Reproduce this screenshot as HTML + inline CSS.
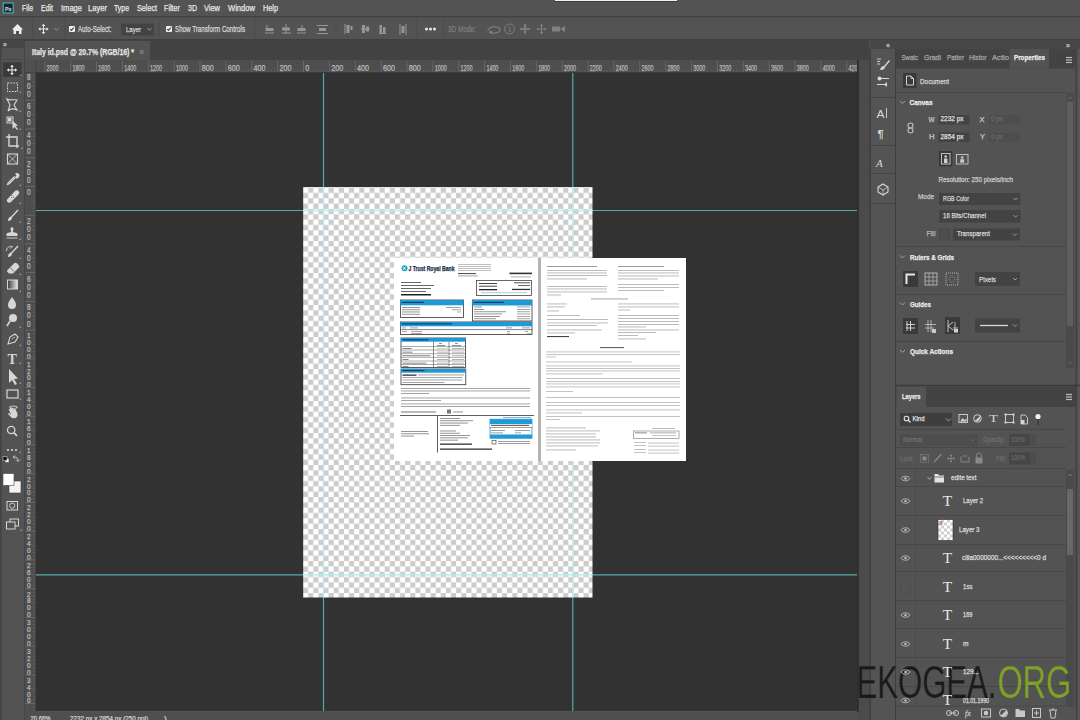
<!DOCTYPE html>
<html><head><meta charset="utf-8"><style>html,body{margin:0;padding:0;width:1080px;height:720px;overflow:hidden;background:#535353}svg{display:block;font-family:"Liberation Sans",sans-serif}</style></head><body><svg width="1080" height="720" viewBox="0 0 1080 720" font-family="Liberation Sans, sans-serif" shape-rendering="auto"><rect x="0" y="0" width="1080" height="720" fill="#535353"/>
<rect x="0" y="0" width="1080" height="16" fill="#535353"/>
<rect x="0" y="16" width="1080" height="1.6" fill="#424242"/>
<rect x="3.3" y="3" width="10" height="10" fill="#0a2a30" stroke="#4f9a90" stroke-width="1.4"/>
<text x="5" y="10.8" font-size="6" fill="#c6bde6" textLength="6.5" lengthAdjust="spacingAndGlyphs" font-weight="bold" stroke="#c6bde6" stroke-width="0.25">Ps</text>
<rect x="555" y="0" width="122" height="1" fill="#f0f0f0"/>
<rect x="555" y="1" width="122" height="1" fill="#3c3c3c"/>
<text x="22" y="11" font-size="9" fill="#e8e8e8" textLength="11" lengthAdjust="spacingAndGlyphs" stroke="#e8e8e8" stroke-width="0.25">File</text>
<text x="41" y="11" font-size="9" fill="#e8e8e8" textLength="12" lengthAdjust="spacingAndGlyphs" stroke="#e8e8e8" stroke-width="0.25">Edit</text>
<text x="61" y="11" font-size="9" fill="#e8e8e8" textLength="21" lengthAdjust="spacingAndGlyphs" stroke="#e8e8e8" stroke-width="0.25">Image</text>
<text x="88" y="11" font-size="9" fill="#e8e8e8" textLength="19" lengthAdjust="spacingAndGlyphs" stroke="#e8e8e8" stroke-width="0.25">Layer</text>
<text x="114" y="11" font-size="9" fill="#e8e8e8" textLength="15" lengthAdjust="spacingAndGlyphs" stroke="#e8e8e8" stroke-width="0.25">Type</text>
<text x="137" y="11" font-size="9" fill="#e8e8e8" textLength="20" lengthAdjust="spacingAndGlyphs" stroke="#e8e8e8" stroke-width="0.25">Select</text>
<text x="164" y="11" font-size="9" fill="#e8e8e8" textLength="16" lengthAdjust="spacingAndGlyphs" stroke="#e8e8e8" stroke-width="0.25">Filter</text>
<text x="188" y="11" font-size="9" fill="#e8e8e8" textLength="9" lengthAdjust="spacingAndGlyphs" stroke="#e8e8e8" stroke-width="0.25">3D</text>
<text x="204" y="11" font-size="9" fill="#e8e8e8" textLength="16" lengthAdjust="spacingAndGlyphs" stroke="#e8e8e8" stroke-width="0.25">View</text>
<text x="228" y="11" font-size="9" fill="#e8e8e8" textLength="27" lengthAdjust="spacingAndGlyphs" stroke="#e8e8e8" stroke-width="0.25">Window</text>
<text x="263" y="11" font-size="9" fill="#e8e8e8" textLength="15" lengthAdjust="spacingAndGlyphs" stroke="#e8e8e8" stroke-width="0.25">Help</text>
<rect x="0" y="17.6" width="1080" height="22" fill="#535353"/>
<line x1="0" y1="39.5" x2="1080" y2="39.5" stroke="#3f3f3f" stroke-width="1"/>
<path d="M12,29.5 L17.5,24 L23,29.5 L21.5,29.5 L21.5,34 L19,34 L19,31 L16,31 L16,34 L13.5,34 L13.5,29.5 Z" fill="#ececec"/>
<line x1="32.5" y1="19" x2="32.5" y2="37" stroke="#4c4c4c" stroke-width="1"/>
<path d="M39.5,29 L47.5,29 M43.5,25.0 L43.5,33.0" fill="none" stroke="#e8e8e8" stroke-width="1.0"/>
<path d="M38.3,29 L40.5,27.2 L40.5,30.8 Z M48.7,29 L46.5,27.2 L46.5,30.8 Z M43.5,23.8 L41.7,26.0 L45.3,26.0 Z M43.5,34.2 L41.7,32.0 L45.3,32.0 Z" fill="#e8e8e8"/>
<path d="M54.5,28 L56.5,30.5 L58.5,28" fill="none" stroke="#8a8a8a" stroke-width="1"/>
<line x1="65" y1="19" x2="65" y2="37" stroke="#4c4c4c" stroke-width="1"/>
<rect x="69.0" y="26.0" width="6" height="6" fill="#f0f0f0" rx="1"/>
<path d="M70.3,29.1 L71.5,30.4 L73.8,27.5" fill="none" stroke="#3a3a3a" stroke-width="1.1"/>
<text x="78" y="32" font-size="8.5" fill="#d8d8d8" textLength="33.5" lengthAdjust="spacingAndGlyphs" stroke="#d8d8d8" stroke-width="0.25">Auto-Select:</text>
<rect x="121" y="23.5" width="33" height="12" fill="#434343"/>
<text x="126" y="32" font-size="8" fill="#d8d8d8" textLength="15" lengthAdjust="spacingAndGlyphs" stroke="#d8d8d8" stroke-width="0.25">Layer</text>
<path d="M147.5,28 L149.5,30.5 L151.5,28" fill="none" stroke="#9a9a9a" stroke-width="1"/>
<line x1="159" y1="19" x2="159" y2="37" stroke="#4c4c4c" stroke-width="1"/>
<rect x="166.0" y="26.0" width="6" height="6" fill="#f0f0f0" rx="1"/>
<path d="M167.3,29.1 L168.5,30.4 L170.8,27.5" fill="none" stroke="#3a3a3a" stroke-width="1.1"/>
<text x="175" y="32" font-size="8.5" fill="#d8d8d8" textLength="70" lengthAdjust="spacingAndGlyphs" stroke="#d8d8d8" stroke-width="0.25">Show Transform Controls</text>
<line x1="255" y1="19" x2="255" y2="37" stroke="#4c4c4c" stroke-width="1"/>
<line x1="265" y1="33" x2="274" y2="33" stroke="#969696" stroke-width="1"/>
<line x1="282" y1="33" x2="291" y2="33" stroke="#969696" stroke-width="1"/>
<line x1="297" y1="33" x2="306" y2="33" stroke="#969696" stroke-width="1"/>
<rect x="265.5" y="28" width="8" height="3" fill="#969696"/>
<line x1="267" y1="25" x2="267" y2="28" stroke="#969696" stroke-width="1"/>
<rect x="282" y="27.5" width="8" height="3" fill="#969696"/>
<line x1="286" y1="24" x2="286" y2="34" stroke="#969696" stroke-width="1"/>
<rect x="297.5" y="28" width="8" height="3" fill="#969696"/>
<line x1="302" y1="25" x2="302" y2="28" stroke="#969696" stroke-width="1"/>
<line x1="317" y1="25.5" x2="328" y2="25.5" stroke="#969696" stroke-width="1"/>
<line x1="317" y1="33.5" x2="328" y2="33.5" stroke="#969696" stroke-width="1"/>
<rect x="319" y="28" width="7" height="3" fill="#969696"/>
<line x1="336" y1="19" x2="336" y2="37" stroke="#4c4c4c" stroke-width="1"/>
<line x1="345" y1="24" x2="345" y2="34" stroke="#969696" stroke-width="1"/>
<rect x="346.5" y="25" width="3" height="8" fill="#969696"/>
<rect x="350.5" y="26" width="2" height="4" fill="#969696"/>
<line x1="361" y1="29" x2="370" y2="29" stroke="#969696" stroke-width="1"/>
<rect x="362" y="25" width="3" height="8" fill="#969696"/>
<rect x="366" y="26.5" width="3" height="5" fill="#969696"/>
<line x1="379" y1="33.5" x2="386" y2="33.5" stroke="#969696" stroke-width="1"/>
<rect x="379.5" y="25" width="2.5" height="8" fill="#969696"/>
<rect x="383" y="27" width="2.5" height="6" fill="#969696"/>
<line x1="400" y1="24" x2="400" y2="35" stroke="#969696" stroke-width="1"/>
<line x1="406" y1="24" x2="406" y2="35" stroke="#969696" stroke-width="1"/>
<rect x="401.5" y="26" width="3" height="7" fill="#969696"/>
<line x1="416.5" y1="19" x2="416.5" y2="37" stroke="#4c4c4c" stroke-width="1"/>
<circle cx="426.5" cy="29" r="1.5" fill="#e8e8e8"/>
<circle cx="430.5" cy="29" r="1.5" fill="#e8e8e8"/>
<circle cx="434.5" cy="29" r="1.5" fill="#e8e8e8"/>
<line x1="443" y1="19" x2="443" y2="37" stroke="#4c4c4c" stroke-width="1"/>
<text x="448" y="32" font-size="8.5" fill="#7c7c7c" textLength="28" lengthAdjust="spacingAndGlyphs" stroke="#7c7c7c" stroke-width="0.25">3D Mode:</text>
<path d="M488,31 C488,26 500,25 500,30 C500,33 492,34 489,32" fill="none" stroke="#808080" stroke-width="1.1"/>
<circle cx="491" cy="32" r="1.3" fill="#808080"/>
<circle cx="509.5" cy="29" r="5" fill="none" stroke="#808080" stroke-width="1"/>
<path d="M508,26.5 L510.5,28.5 L509,31 L511,32" fill="none" stroke="#808080" stroke-width="1"/>
<path d="M521.4,29 L528.6,29 M525,25.4 L525,32.6" fill="none" stroke="#808080" stroke-width="0.9"/>
<path d="M520.32,29 L522.3000000000001,27.38 L522.3000000000001,30.62 Z M529.68,29 L527.6999999999999,27.38 L527.6999999999999,30.62 Z M525,24.32 L523.38,26.3 L526.62,26.3 Z M525,33.68 L523.38,31.7 L526.62,31.7 Z" fill="#808080"/>
<path d="M520,29 L530,29 M525,24 L525,34" fill="none" stroke="#808080" stroke-width="1.5"/>
<path d="M537.5,29 L545.5,29 M541.5,25 L541.5,33" fill="none" stroke="#808080" stroke-width="1.0"/>
<path d="M536.3,29 L538.5,27.2 L538.5,30.8 Z M546.7,29 L544.5,27.2 L544.5,30.8 Z M541.5,23.8 L539.7,26.0 L543.3,26.0 Z M541.5,34.2 L539.7,32.0 L543.3,32.0 Z" fill="#808080"/>
<rect x="552" y="26.5" width="8" height="5" fill="#808080"/>
<path d="M560,29 L565,26 L565,32 Z" fill="#808080"/>
<rect x="24" y="40" width="845" height="20" fill="#424242"/>
<rect x="25" y="41" width="125" height="19" fill="#535353"/>
<text x="32" y="55" font-size="9" fill="#e6e6e6" textLength="102" lengthAdjust="spacingAndGlyphs" font-weight="bold" stroke="#e6e6e6" stroke-width="0.25">Italy id.psd @ 20.7% (RGB/16) *</text>
<text x="139" y="55" font-size="9" fill="#8a8a8a" stroke="#8a8a8a" stroke-width="0.25">×</text>
<rect x="0" y="40" width="24" height="680" fill="#535353"/>
<rect x="0" y="40" width="24" height="8.5" fill="#464646"/>
<text x="3" y="47" font-size="7" fill="#c8c8c8" stroke="#c8c8c8" stroke-width="0.25">»</text>
<line x1="0" y1="49" x2="24" y2="49" stroke="#585858" stroke-width="1"/>
<line x1="3" y1="59.5" x2="21" y2="59.5" stroke="#474747" stroke-width="1"/>
<line x1="24.5" y1="40" x2="24.5" y2="720" stroke="#454545" stroke-width="1"/>
<rect x="0" y="40" width="1.6" height="680" fill="#434343"/>
<rect x="25" y="60" width="832.5" height="13" fill="#4e4e4e"/>
<line x1="25" y1="72.5" x2="857.5" y2="72.5" stroke="#3a3a3a" stroke-width="1"/>
<line x1="35.5" y1="60" x2="35.5" y2="712" stroke="#3a3a3a" stroke-width="1"/>
<rect x="25" y="60" width="10.5" height="12.5" fill="#505050"/>
<line x1="44.80000000000001" y1="61" x2="44.80000000000001" y2="72" stroke="#6e6e6e" stroke-width="0.8"/>
<text x="46.60000000000001" y="71" font-size="8.5" fill="#bdbdbd" textLength="12" lengthAdjust="spacingAndGlyphs" stroke="#bdbdbd" stroke-width="0.25">2000</text>
<line x1="48.03375000000001" y1="70.2" x2="48.03375000000001" y2="72" stroke="#6a6a6a" stroke-width="0.6"/>
<line x1="51.26750000000001" y1="70.2" x2="51.26750000000001" y2="72" stroke="#6a6a6a" stroke-width="0.6"/>
<line x1="54.50125000000001" y1="70.2" x2="54.50125000000001" y2="72" stroke="#6a6a6a" stroke-width="0.6"/>
<line x1="57.735000000000014" y1="69" x2="57.735000000000014" y2="72" stroke="#6a6a6a" stroke-width="0.6"/>
<line x1="60.968750000000014" y1="70.2" x2="60.968750000000014" y2="72" stroke="#6a6a6a" stroke-width="0.6"/>
<line x1="64.20250000000001" y1="70.2" x2="64.20250000000001" y2="72" stroke="#6a6a6a" stroke-width="0.6"/>
<line x1="67.43625000000002" y1="70.2" x2="67.43625000000002" y2="72" stroke="#6a6a6a" stroke-width="0.6"/>
<line x1="70.66999999999999" y1="61" x2="70.66999999999999" y2="72" stroke="#6e6e6e" stroke-width="0.8"/>
<text x="72.46999999999998" y="71" font-size="8.5" fill="#bdbdbd" textLength="12" lengthAdjust="spacingAndGlyphs" stroke="#bdbdbd" stroke-width="0.25">1800</text>
<line x1="73.90374999999999" y1="70.2" x2="73.90374999999999" y2="72" stroke="#6a6a6a" stroke-width="0.6"/>
<line x1="77.13749999999999" y1="70.2" x2="77.13749999999999" y2="72" stroke="#6a6a6a" stroke-width="0.6"/>
<line x1="80.37124999999999" y1="70.2" x2="80.37124999999999" y2="72" stroke="#6a6a6a" stroke-width="0.6"/>
<line x1="83.60499999999999" y1="69" x2="83.60499999999999" y2="72" stroke="#6a6a6a" stroke-width="0.6"/>
<line x1="86.83874999999999" y1="70.2" x2="86.83874999999999" y2="72" stroke="#6a6a6a" stroke-width="0.6"/>
<line x1="90.07249999999999" y1="70.2" x2="90.07249999999999" y2="72" stroke="#6a6a6a" stroke-width="0.6"/>
<line x1="93.30624999999999" y1="70.2" x2="93.30624999999999" y2="72" stroke="#6a6a6a" stroke-width="0.6"/>
<line x1="96.53999999999999" y1="61" x2="96.53999999999999" y2="72" stroke="#6e6e6e" stroke-width="0.8"/>
<text x="98.33999999999999" y="71" font-size="8.5" fill="#bdbdbd" textLength="12" lengthAdjust="spacingAndGlyphs" stroke="#bdbdbd" stroke-width="0.25">1600</text>
<line x1="99.77374999999999" y1="70.2" x2="99.77374999999999" y2="72" stroke="#6a6a6a" stroke-width="0.6"/>
<line x1="103.0075" y1="70.2" x2="103.0075" y2="72" stroke="#6a6a6a" stroke-width="0.6"/>
<line x1="106.24125" y1="70.2" x2="106.24125" y2="72" stroke="#6a6a6a" stroke-width="0.6"/>
<line x1="109.475" y1="69" x2="109.475" y2="72" stroke="#6a6a6a" stroke-width="0.6"/>
<line x1="112.70875" y1="70.2" x2="112.70875" y2="72" stroke="#6a6a6a" stroke-width="0.6"/>
<line x1="115.9425" y1="70.2" x2="115.9425" y2="72" stroke="#6a6a6a" stroke-width="0.6"/>
<line x1="119.17625" y1="70.2" x2="119.17625" y2="72" stroke="#6a6a6a" stroke-width="0.6"/>
<line x1="122.41" y1="61" x2="122.41" y2="72" stroke="#6e6e6e" stroke-width="0.8"/>
<text x="124.21" y="71" font-size="8.5" fill="#bdbdbd" textLength="12" lengthAdjust="spacingAndGlyphs" stroke="#bdbdbd" stroke-width="0.25">1400</text>
<line x1="125.64375" y1="70.2" x2="125.64375" y2="72" stroke="#6a6a6a" stroke-width="0.6"/>
<line x1="128.8775" y1="70.2" x2="128.8775" y2="72" stroke="#6a6a6a" stroke-width="0.6"/>
<line x1="132.11124999999998" y1="70.2" x2="132.11124999999998" y2="72" stroke="#6a6a6a" stroke-width="0.6"/>
<line x1="135.345" y1="69" x2="135.345" y2="72" stroke="#6a6a6a" stroke-width="0.6"/>
<line x1="138.57874999999999" y1="70.2" x2="138.57874999999999" y2="72" stroke="#6a6a6a" stroke-width="0.6"/>
<line x1="141.8125" y1="70.2" x2="141.8125" y2="72" stroke="#6a6a6a" stroke-width="0.6"/>
<line x1="145.04625" y1="70.2" x2="145.04625" y2="72" stroke="#6a6a6a" stroke-width="0.6"/>
<line x1="148.28" y1="61" x2="148.28" y2="72" stroke="#6e6e6e" stroke-width="0.8"/>
<text x="150.08" y="71" font-size="8.5" fill="#bdbdbd" textLength="12" lengthAdjust="spacingAndGlyphs" stroke="#bdbdbd" stroke-width="0.25">1200</text>
<line x1="151.51375" y1="70.2" x2="151.51375" y2="72" stroke="#6a6a6a" stroke-width="0.6"/>
<line x1="154.7475" y1="70.2" x2="154.7475" y2="72" stroke="#6a6a6a" stroke-width="0.6"/>
<line x1="157.98125" y1="70.2" x2="157.98125" y2="72" stroke="#6a6a6a" stroke-width="0.6"/>
<line x1="161.215" y1="69" x2="161.215" y2="72" stroke="#6a6a6a" stroke-width="0.6"/>
<line x1="164.44875" y1="70.2" x2="164.44875" y2="72" stroke="#6a6a6a" stroke-width="0.6"/>
<line x1="167.6825" y1="70.2" x2="167.6825" y2="72" stroke="#6a6a6a" stroke-width="0.6"/>
<line x1="170.91625" y1="70.2" x2="170.91625" y2="72" stroke="#6a6a6a" stroke-width="0.6"/>
<line x1="174.15" y1="61" x2="174.15" y2="72" stroke="#6e6e6e" stroke-width="0.8"/>
<text x="175.95000000000002" y="71" font-size="8.5" fill="#bdbdbd" textLength="12" lengthAdjust="spacingAndGlyphs" stroke="#bdbdbd" stroke-width="0.25">1000</text>
<line x1="177.38375" y1="70.2" x2="177.38375" y2="72" stroke="#6a6a6a" stroke-width="0.6"/>
<line x1="180.6175" y1="70.2" x2="180.6175" y2="72" stroke="#6a6a6a" stroke-width="0.6"/>
<line x1="183.85125" y1="70.2" x2="183.85125" y2="72" stroke="#6a6a6a" stroke-width="0.6"/>
<line x1="187.085" y1="69" x2="187.085" y2="72" stroke="#6a6a6a" stroke-width="0.6"/>
<line x1="190.31875" y1="70.2" x2="190.31875" y2="72" stroke="#6a6a6a" stroke-width="0.6"/>
<line x1="193.5525" y1="70.2" x2="193.5525" y2="72" stroke="#6a6a6a" stroke-width="0.6"/>
<line x1="196.78625" y1="70.2" x2="196.78625" y2="72" stroke="#6a6a6a" stroke-width="0.6"/>
<line x1="200.01999999999998" y1="61" x2="200.01999999999998" y2="72" stroke="#6e6e6e" stroke-width="0.8"/>
<text x="201.82" y="71" font-size="8.5" fill="#bdbdbd" textLength="12" lengthAdjust="spacingAndGlyphs" stroke="#bdbdbd" stroke-width="0.25">800</text>
<line x1="203.25374999999997" y1="70.2" x2="203.25374999999997" y2="72" stroke="#6a6a6a" stroke-width="0.6"/>
<line x1="206.48749999999998" y1="70.2" x2="206.48749999999998" y2="72" stroke="#6a6a6a" stroke-width="0.6"/>
<line x1="209.72124999999997" y1="70.2" x2="209.72124999999997" y2="72" stroke="#6a6a6a" stroke-width="0.6"/>
<line x1="212.95499999999998" y1="69" x2="212.95499999999998" y2="72" stroke="#6a6a6a" stroke-width="0.6"/>
<line x1="216.18874999999997" y1="70.2" x2="216.18874999999997" y2="72" stroke="#6a6a6a" stroke-width="0.6"/>
<line x1="219.42249999999999" y1="70.2" x2="219.42249999999999" y2="72" stroke="#6a6a6a" stroke-width="0.6"/>
<line x1="222.65624999999997" y1="70.2" x2="222.65624999999997" y2="72" stroke="#6a6a6a" stroke-width="0.6"/>
<line x1="225.89" y1="61" x2="225.89" y2="72" stroke="#6e6e6e" stroke-width="0.8"/>
<text x="227.69" y="71" font-size="8.5" fill="#bdbdbd" textLength="12" lengthAdjust="spacingAndGlyphs" stroke="#bdbdbd" stroke-width="0.25">600</text>
<line x1="229.12374999999997" y1="70.2" x2="229.12374999999997" y2="72" stroke="#6a6a6a" stroke-width="0.6"/>
<line x1="232.3575" y1="70.2" x2="232.3575" y2="72" stroke="#6a6a6a" stroke-width="0.6"/>
<line x1="235.59124999999997" y1="70.2" x2="235.59124999999997" y2="72" stroke="#6a6a6a" stroke-width="0.6"/>
<line x1="238.825" y1="69" x2="238.825" y2="72" stroke="#6a6a6a" stroke-width="0.6"/>
<line x1="242.05874999999997" y1="70.2" x2="242.05874999999997" y2="72" stroke="#6a6a6a" stroke-width="0.6"/>
<line x1="245.2925" y1="70.2" x2="245.2925" y2="72" stroke="#6a6a6a" stroke-width="0.6"/>
<line x1="248.52624999999998" y1="70.2" x2="248.52624999999998" y2="72" stroke="#6a6a6a" stroke-width="0.6"/>
<line x1="251.76" y1="61" x2="251.76" y2="72" stroke="#6e6e6e" stroke-width="0.8"/>
<text x="253.56" y="71" font-size="8.5" fill="#bdbdbd" textLength="12" lengthAdjust="spacingAndGlyphs" stroke="#bdbdbd" stroke-width="0.25">400</text>
<line x1="254.99374999999998" y1="70.2" x2="254.99374999999998" y2="72" stroke="#6a6a6a" stroke-width="0.6"/>
<line x1="258.22749999999996" y1="70.2" x2="258.22749999999996" y2="72" stroke="#6a6a6a" stroke-width="0.6"/>
<line x1="261.46125" y1="70.2" x2="261.46125" y2="72" stroke="#6a6a6a" stroke-width="0.6"/>
<line x1="264.695" y1="69" x2="264.695" y2="72" stroke="#6a6a6a" stroke-width="0.6"/>
<line x1="267.92875" y1="70.2" x2="267.92875" y2="72" stroke="#6a6a6a" stroke-width="0.6"/>
<line x1="271.16249999999997" y1="70.2" x2="271.16249999999997" y2="72" stroke="#6a6a6a" stroke-width="0.6"/>
<line x1="274.39625" y1="70.2" x2="274.39625" y2="72" stroke="#6a6a6a" stroke-width="0.6"/>
<line x1="277.63" y1="61" x2="277.63" y2="72" stroke="#6e6e6e" stroke-width="0.8"/>
<text x="279.43" y="71" font-size="8.5" fill="#bdbdbd" textLength="12" lengthAdjust="spacingAndGlyphs" stroke="#bdbdbd" stroke-width="0.25">200</text>
<line x1="280.86375" y1="70.2" x2="280.86375" y2="72" stroke="#6a6a6a" stroke-width="0.6"/>
<line x1="284.09749999999997" y1="70.2" x2="284.09749999999997" y2="72" stroke="#6a6a6a" stroke-width="0.6"/>
<line x1="287.33125" y1="70.2" x2="287.33125" y2="72" stroke="#6a6a6a" stroke-width="0.6"/>
<line x1="290.565" y1="69" x2="290.565" y2="72" stroke="#6a6a6a" stroke-width="0.6"/>
<line x1="293.79875" y1="70.2" x2="293.79875" y2="72" stroke="#6a6a6a" stroke-width="0.6"/>
<line x1="297.03249999999997" y1="70.2" x2="297.03249999999997" y2="72" stroke="#6a6a6a" stroke-width="0.6"/>
<line x1="300.26625" y1="70.2" x2="300.26625" y2="72" stroke="#6a6a6a" stroke-width="0.6"/>
<line x1="303.5" y1="61" x2="303.5" y2="72" stroke="#6e6e6e" stroke-width="0.8"/>
<text x="305.3" y="71" font-size="8.5" fill="#bdbdbd" textLength="4" lengthAdjust="spacingAndGlyphs" stroke="#bdbdbd" stroke-width="0.25">0</text>
<line x1="306.73375" y1="70.2" x2="306.73375" y2="72" stroke="#6a6a6a" stroke-width="0.6"/>
<line x1="309.9675" y1="70.2" x2="309.9675" y2="72" stroke="#6a6a6a" stroke-width="0.6"/>
<line x1="313.20125" y1="70.2" x2="313.20125" y2="72" stroke="#6a6a6a" stroke-width="0.6"/>
<line x1="316.435" y1="69" x2="316.435" y2="72" stroke="#6a6a6a" stroke-width="0.6"/>
<line x1="319.66875" y1="70.2" x2="319.66875" y2="72" stroke="#6a6a6a" stroke-width="0.6"/>
<line x1="322.9025" y1="70.2" x2="322.9025" y2="72" stroke="#6a6a6a" stroke-width="0.6"/>
<line x1="326.13625" y1="70.2" x2="326.13625" y2="72" stroke="#6a6a6a" stroke-width="0.6"/>
<line x1="329.37" y1="61" x2="329.37" y2="72" stroke="#6e6e6e" stroke-width="0.8"/>
<text x="331.17" y="71" font-size="8.5" fill="#bdbdbd" textLength="12" lengthAdjust="spacingAndGlyphs" stroke="#bdbdbd" stroke-width="0.25">200</text>
<line x1="332.60375" y1="70.2" x2="332.60375" y2="72" stroke="#6a6a6a" stroke-width="0.6"/>
<line x1="335.8375" y1="70.2" x2="335.8375" y2="72" stroke="#6a6a6a" stroke-width="0.6"/>
<line x1="339.07125" y1="70.2" x2="339.07125" y2="72" stroke="#6a6a6a" stroke-width="0.6"/>
<line x1="342.305" y1="69" x2="342.305" y2="72" stroke="#6a6a6a" stroke-width="0.6"/>
<line x1="345.53875" y1="70.2" x2="345.53875" y2="72" stroke="#6a6a6a" stroke-width="0.6"/>
<line x1="348.7725" y1="70.2" x2="348.7725" y2="72" stroke="#6a6a6a" stroke-width="0.6"/>
<line x1="352.00625" y1="70.2" x2="352.00625" y2="72" stroke="#6a6a6a" stroke-width="0.6"/>
<line x1="355.24" y1="61" x2="355.24" y2="72" stroke="#6e6e6e" stroke-width="0.8"/>
<text x="357.04" y="71" font-size="8.5" fill="#bdbdbd" textLength="12" lengthAdjust="spacingAndGlyphs" stroke="#bdbdbd" stroke-width="0.25">400</text>
<line x1="358.47375" y1="70.2" x2="358.47375" y2="72" stroke="#6a6a6a" stroke-width="0.6"/>
<line x1="361.7075" y1="70.2" x2="361.7075" y2="72" stroke="#6a6a6a" stroke-width="0.6"/>
<line x1="364.94125" y1="70.2" x2="364.94125" y2="72" stroke="#6a6a6a" stroke-width="0.6"/>
<line x1="368.175" y1="69" x2="368.175" y2="72" stroke="#6a6a6a" stroke-width="0.6"/>
<line x1="371.40875" y1="70.2" x2="371.40875" y2="72" stroke="#6a6a6a" stroke-width="0.6"/>
<line x1="374.6425" y1="70.2" x2="374.6425" y2="72" stroke="#6a6a6a" stroke-width="0.6"/>
<line x1="377.87625" y1="70.2" x2="377.87625" y2="72" stroke="#6a6a6a" stroke-width="0.6"/>
<line x1="381.11" y1="61" x2="381.11" y2="72" stroke="#6e6e6e" stroke-width="0.8"/>
<text x="382.91" y="71" font-size="8.5" fill="#bdbdbd" textLength="12" lengthAdjust="spacingAndGlyphs" stroke="#bdbdbd" stroke-width="0.25">600</text>
<line x1="384.34375" y1="70.2" x2="384.34375" y2="72" stroke="#6a6a6a" stroke-width="0.6"/>
<line x1="387.5775" y1="70.2" x2="387.5775" y2="72" stroke="#6a6a6a" stroke-width="0.6"/>
<line x1="390.81125000000003" y1="70.2" x2="390.81125000000003" y2="72" stroke="#6a6a6a" stroke-width="0.6"/>
<line x1="394.045" y1="69" x2="394.045" y2="72" stroke="#6a6a6a" stroke-width="0.6"/>
<line x1="397.27875" y1="70.2" x2="397.27875" y2="72" stroke="#6a6a6a" stroke-width="0.6"/>
<line x1="400.5125" y1="70.2" x2="400.5125" y2="72" stroke="#6a6a6a" stroke-width="0.6"/>
<line x1="403.74625000000003" y1="70.2" x2="403.74625000000003" y2="72" stroke="#6a6a6a" stroke-width="0.6"/>
<line x1="406.98" y1="61" x2="406.98" y2="72" stroke="#6e6e6e" stroke-width="0.8"/>
<text x="408.78000000000003" y="71" font-size="8.5" fill="#bdbdbd" textLength="12" lengthAdjust="spacingAndGlyphs" stroke="#bdbdbd" stroke-width="0.25">800</text>
<line x1="410.21375" y1="70.2" x2="410.21375" y2="72" stroke="#6a6a6a" stroke-width="0.6"/>
<line x1="413.4475" y1="70.2" x2="413.4475" y2="72" stroke="#6a6a6a" stroke-width="0.6"/>
<line x1="416.68125000000003" y1="70.2" x2="416.68125000000003" y2="72" stroke="#6a6a6a" stroke-width="0.6"/>
<line x1="419.915" y1="69" x2="419.915" y2="72" stroke="#6a6a6a" stroke-width="0.6"/>
<line x1="423.14875" y1="70.2" x2="423.14875" y2="72" stroke="#6a6a6a" stroke-width="0.6"/>
<line x1="426.3825" y1="70.2" x2="426.3825" y2="72" stroke="#6a6a6a" stroke-width="0.6"/>
<line x1="429.61625000000004" y1="70.2" x2="429.61625000000004" y2="72" stroke="#6a6a6a" stroke-width="0.6"/>
<line x1="432.85" y1="61" x2="432.85" y2="72" stroke="#6e6e6e" stroke-width="0.8"/>
<text x="434.65000000000003" y="71" font-size="8.5" fill="#bdbdbd" textLength="12" lengthAdjust="spacingAndGlyphs" stroke="#bdbdbd" stroke-width="0.25">1000</text>
<line x1="436.08375" y1="70.2" x2="436.08375" y2="72" stroke="#6a6a6a" stroke-width="0.6"/>
<line x1="439.3175" y1="70.2" x2="439.3175" y2="72" stroke="#6a6a6a" stroke-width="0.6"/>
<line x1="442.55125000000004" y1="70.2" x2="442.55125000000004" y2="72" stroke="#6a6a6a" stroke-width="0.6"/>
<line x1="445.785" y1="69" x2="445.785" y2="72" stroke="#6a6a6a" stroke-width="0.6"/>
<line x1="449.01875" y1="70.2" x2="449.01875" y2="72" stroke="#6a6a6a" stroke-width="0.6"/>
<line x1="452.2525" y1="70.2" x2="452.2525" y2="72" stroke="#6a6a6a" stroke-width="0.6"/>
<line x1="455.48625000000004" y1="70.2" x2="455.48625000000004" y2="72" stroke="#6a6a6a" stroke-width="0.6"/>
<line x1="458.72" y1="61" x2="458.72" y2="72" stroke="#6e6e6e" stroke-width="0.8"/>
<text x="460.52000000000004" y="71" font-size="8.5" fill="#bdbdbd" textLength="12" lengthAdjust="spacingAndGlyphs" stroke="#bdbdbd" stroke-width="0.25">1200</text>
<line x1="461.95375" y1="70.2" x2="461.95375" y2="72" stroke="#6a6a6a" stroke-width="0.6"/>
<line x1="465.1875" y1="70.2" x2="465.1875" y2="72" stroke="#6a6a6a" stroke-width="0.6"/>
<line x1="468.42125000000004" y1="70.2" x2="468.42125000000004" y2="72" stroke="#6a6a6a" stroke-width="0.6"/>
<line x1="471.65500000000003" y1="69" x2="471.65500000000003" y2="72" stroke="#6a6a6a" stroke-width="0.6"/>
<line x1="474.88875" y1="70.2" x2="474.88875" y2="72" stroke="#6a6a6a" stroke-width="0.6"/>
<line x1="478.1225" y1="70.2" x2="478.1225" y2="72" stroke="#6a6a6a" stroke-width="0.6"/>
<line x1="481.35625000000005" y1="70.2" x2="481.35625000000005" y2="72" stroke="#6a6a6a" stroke-width="0.6"/>
<line x1="484.59000000000003" y1="61" x2="484.59000000000003" y2="72" stroke="#6e6e6e" stroke-width="0.8"/>
<text x="486.39000000000004" y="71" font-size="8.5" fill="#bdbdbd" textLength="12" lengthAdjust="spacingAndGlyphs" stroke="#bdbdbd" stroke-width="0.25">1400</text>
<line x1="487.82375" y1="70.2" x2="487.82375" y2="72" stroke="#6a6a6a" stroke-width="0.6"/>
<line x1="491.0575" y1="70.2" x2="491.0575" y2="72" stroke="#6a6a6a" stroke-width="0.6"/>
<line x1="494.29125000000005" y1="70.2" x2="494.29125000000005" y2="72" stroke="#6a6a6a" stroke-width="0.6"/>
<line x1="497.52500000000003" y1="69" x2="497.52500000000003" y2="72" stroke="#6a6a6a" stroke-width="0.6"/>
<line x1="500.75875" y1="70.2" x2="500.75875" y2="72" stroke="#6a6a6a" stroke-width="0.6"/>
<line x1="503.9925" y1="70.2" x2="503.9925" y2="72" stroke="#6a6a6a" stroke-width="0.6"/>
<line x1="507.22625000000005" y1="70.2" x2="507.22625000000005" y2="72" stroke="#6a6a6a" stroke-width="0.6"/>
<line x1="510.46000000000004" y1="61" x2="510.46000000000004" y2="72" stroke="#6e6e6e" stroke-width="0.8"/>
<text x="512.26" y="71" font-size="8.5" fill="#bdbdbd" textLength="12" lengthAdjust="spacingAndGlyphs" stroke="#bdbdbd" stroke-width="0.25">1600</text>
<line x1="513.69375" y1="70.2" x2="513.69375" y2="72" stroke="#6a6a6a" stroke-width="0.6"/>
<line x1="516.9275" y1="70.2" x2="516.9275" y2="72" stroke="#6a6a6a" stroke-width="0.6"/>
<line x1="520.16125" y1="70.2" x2="520.16125" y2="72" stroke="#6a6a6a" stroke-width="0.6"/>
<line x1="523.395" y1="69" x2="523.395" y2="72" stroke="#6a6a6a" stroke-width="0.6"/>
<line x1="526.6287500000001" y1="70.2" x2="526.6287500000001" y2="72" stroke="#6a6a6a" stroke-width="0.6"/>
<line x1="529.8625000000001" y1="70.2" x2="529.8625000000001" y2="72" stroke="#6a6a6a" stroke-width="0.6"/>
<line x1="533.09625" y1="70.2" x2="533.09625" y2="72" stroke="#6a6a6a" stroke-width="0.6"/>
<line x1="536.33" y1="61" x2="536.33" y2="72" stroke="#6e6e6e" stroke-width="0.8"/>
<text x="538.13" y="71" font-size="8.5" fill="#bdbdbd" textLength="12" lengthAdjust="spacingAndGlyphs" stroke="#bdbdbd" stroke-width="0.25">1800</text>
<line x1="539.56375" y1="70.2" x2="539.56375" y2="72" stroke="#6a6a6a" stroke-width="0.6"/>
<line x1="542.7975" y1="70.2" x2="542.7975" y2="72" stroke="#6a6a6a" stroke-width="0.6"/>
<line x1="546.03125" y1="70.2" x2="546.03125" y2="72" stroke="#6a6a6a" stroke-width="0.6"/>
<line x1="549.265" y1="69" x2="549.265" y2="72" stroke="#6a6a6a" stroke-width="0.6"/>
<line x1="552.4987500000001" y1="70.2" x2="552.4987500000001" y2="72" stroke="#6a6a6a" stroke-width="0.6"/>
<line x1="555.7325000000001" y1="70.2" x2="555.7325000000001" y2="72" stroke="#6a6a6a" stroke-width="0.6"/>
<line x1="558.9662500000001" y1="70.2" x2="558.9662500000001" y2="72" stroke="#6a6a6a" stroke-width="0.6"/>
<line x1="562.2" y1="61" x2="562.2" y2="72" stroke="#6e6e6e" stroke-width="0.8"/>
<text x="564.0" y="71" font-size="8.5" fill="#bdbdbd" textLength="12" lengthAdjust="spacingAndGlyphs" stroke="#bdbdbd" stroke-width="0.25">2000</text>
<line x1="565.43375" y1="70.2" x2="565.43375" y2="72" stroke="#6a6a6a" stroke-width="0.6"/>
<line x1="568.6675" y1="70.2" x2="568.6675" y2="72" stroke="#6a6a6a" stroke-width="0.6"/>
<line x1="571.90125" y1="70.2" x2="571.90125" y2="72" stroke="#6a6a6a" stroke-width="0.6"/>
<line x1="575.135" y1="69" x2="575.135" y2="72" stroke="#6a6a6a" stroke-width="0.6"/>
<line x1="578.3687500000001" y1="70.2" x2="578.3687500000001" y2="72" stroke="#6a6a6a" stroke-width="0.6"/>
<line x1="581.6025000000001" y1="70.2" x2="581.6025000000001" y2="72" stroke="#6a6a6a" stroke-width="0.6"/>
<line x1="584.8362500000001" y1="70.2" x2="584.8362500000001" y2="72" stroke="#6a6a6a" stroke-width="0.6"/>
<line x1="588.0699999999999" y1="61" x2="588.0699999999999" y2="72" stroke="#6e6e6e" stroke-width="0.8"/>
<text x="589.8699999999999" y="71" font-size="8.5" fill="#bdbdbd" textLength="12" lengthAdjust="spacingAndGlyphs" stroke="#bdbdbd" stroke-width="0.25">2200</text>
<line x1="591.3037499999999" y1="70.2" x2="591.3037499999999" y2="72" stroke="#6a6a6a" stroke-width="0.6"/>
<line x1="594.5374999999999" y1="70.2" x2="594.5374999999999" y2="72" stroke="#6a6a6a" stroke-width="0.6"/>
<line x1="597.7712499999999" y1="70.2" x2="597.7712499999999" y2="72" stroke="#6a6a6a" stroke-width="0.6"/>
<line x1="601.0049999999999" y1="69" x2="601.0049999999999" y2="72" stroke="#6a6a6a" stroke-width="0.6"/>
<line x1="604.23875" y1="70.2" x2="604.23875" y2="72" stroke="#6a6a6a" stroke-width="0.6"/>
<line x1="607.4725" y1="70.2" x2="607.4725" y2="72" stroke="#6a6a6a" stroke-width="0.6"/>
<line x1="610.70625" y1="70.2" x2="610.70625" y2="72" stroke="#6a6a6a" stroke-width="0.6"/>
<line x1="613.94" y1="61" x2="613.94" y2="72" stroke="#6e6e6e" stroke-width="0.8"/>
<text x="615.74" y="71" font-size="8.5" fill="#bdbdbd" textLength="12" lengthAdjust="spacingAndGlyphs" stroke="#bdbdbd" stroke-width="0.25">2400</text>
<line x1="617.17375" y1="70.2" x2="617.17375" y2="72" stroke="#6a6a6a" stroke-width="0.6"/>
<line x1="620.4075" y1="70.2" x2="620.4075" y2="72" stroke="#6a6a6a" stroke-width="0.6"/>
<line x1="623.64125" y1="70.2" x2="623.64125" y2="72" stroke="#6a6a6a" stroke-width="0.6"/>
<line x1="626.875" y1="69" x2="626.875" y2="72" stroke="#6a6a6a" stroke-width="0.6"/>
<line x1="630.1087500000001" y1="70.2" x2="630.1087500000001" y2="72" stroke="#6a6a6a" stroke-width="0.6"/>
<line x1="633.3425000000001" y1="70.2" x2="633.3425000000001" y2="72" stroke="#6a6a6a" stroke-width="0.6"/>
<line x1="636.5762500000001" y1="70.2" x2="636.5762500000001" y2="72" stroke="#6a6a6a" stroke-width="0.6"/>
<line x1="639.81" y1="61" x2="639.81" y2="72" stroke="#6e6e6e" stroke-width="0.8"/>
<text x="641.6099999999999" y="71" font-size="8.5" fill="#bdbdbd" textLength="12" lengthAdjust="spacingAndGlyphs" stroke="#bdbdbd" stroke-width="0.25">2600</text>
<line x1="643.0437499999999" y1="70.2" x2="643.0437499999999" y2="72" stroke="#6a6a6a" stroke-width="0.6"/>
<line x1="646.2774999999999" y1="70.2" x2="646.2774999999999" y2="72" stroke="#6a6a6a" stroke-width="0.6"/>
<line x1="649.5112499999999" y1="70.2" x2="649.5112499999999" y2="72" stroke="#6a6a6a" stroke-width="0.6"/>
<line x1="652.7449999999999" y1="69" x2="652.7449999999999" y2="72" stroke="#6a6a6a" stroke-width="0.6"/>
<line x1="655.97875" y1="70.2" x2="655.97875" y2="72" stroke="#6a6a6a" stroke-width="0.6"/>
<line x1="659.2125" y1="70.2" x2="659.2125" y2="72" stroke="#6a6a6a" stroke-width="0.6"/>
<line x1="662.44625" y1="70.2" x2="662.44625" y2="72" stroke="#6a6a6a" stroke-width="0.6"/>
<line x1="665.6800000000001" y1="61" x2="665.6800000000001" y2="72" stroke="#6e6e6e" stroke-width="0.8"/>
<text x="667.48" y="71" font-size="8.5" fill="#bdbdbd" textLength="12" lengthAdjust="spacingAndGlyphs" stroke="#bdbdbd" stroke-width="0.25">2800</text>
<line x1="668.91375" y1="70.2" x2="668.91375" y2="72" stroke="#6a6a6a" stroke-width="0.6"/>
<line x1="672.1475" y1="70.2" x2="672.1475" y2="72" stroke="#6a6a6a" stroke-width="0.6"/>
<line x1="675.38125" y1="70.2" x2="675.38125" y2="72" stroke="#6a6a6a" stroke-width="0.6"/>
<line x1="678.615" y1="69" x2="678.615" y2="72" stroke="#6a6a6a" stroke-width="0.6"/>
<line x1="681.8487500000001" y1="70.2" x2="681.8487500000001" y2="72" stroke="#6a6a6a" stroke-width="0.6"/>
<line x1="685.0825000000001" y1="70.2" x2="685.0825000000001" y2="72" stroke="#6a6a6a" stroke-width="0.6"/>
<line x1="688.3162500000001" y1="70.2" x2="688.3162500000001" y2="72" stroke="#6a6a6a" stroke-width="0.6"/>
<line x1="691.55" y1="61" x2="691.55" y2="72" stroke="#6e6e6e" stroke-width="0.8"/>
<text x="693.3499999999999" y="71" font-size="8.5" fill="#bdbdbd" textLength="12" lengthAdjust="spacingAndGlyphs" stroke="#bdbdbd" stroke-width="0.25">3000</text>
<line x1="694.7837499999999" y1="70.2" x2="694.7837499999999" y2="72" stroke="#6a6a6a" stroke-width="0.6"/>
<line x1="698.0174999999999" y1="70.2" x2="698.0174999999999" y2="72" stroke="#6a6a6a" stroke-width="0.6"/>
<line x1="701.2512499999999" y1="70.2" x2="701.2512499999999" y2="72" stroke="#6a6a6a" stroke-width="0.6"/>
<line x1="704.4849999999999" y1="69" x2="704.4849999999999" y2="72" stroke="#6a6a6a" stroke-width="0.6"/>
<line x1="707.71875" y1="70.2" x2="707.71875" y2="72" stroke="#6a6a6a" stroke-width="0.6"/>
<line x1="710.9525" y1="70.2" x2="710.9525" y2="72" stroke="#6a6a6a" stroke-width="0.6"/>
<line x1="714.18625" y1="70.2" x2="714.18625" y2="72" stroke="#6a6a6a" stroke-width="0.6"/>
<line x1="717.4200000000001" y1="61" x2="717.4200000000001" y2="72" stroke="#6e6e6e" stroke-width="0.8"/>
<text x="719.22" y="71" font-size="8.5" fill="#bdbdbd" textLength="12" lengthAdjust="spacingAndGlyphs" stroke="#bdbdbd" stroke-width="0.25">3200</text>
<line x1="720.6537500000001" y1="70.2" x2="720.6537500000001" y2="72" stroke="#6a6a6a" stroke-width="0.6"/>
<line x1="723.8875" y1="70.2" x2="723.8875" y2="72" stroke="#6a6a6a" stroke-width="0.6"/>
<line x1="727.12125" y1="70.2" x2="727.12125" y2="72" stroke="#6a6a6a" stroke-width="0.6"/>
<line x1="730.355" y1="69" x2="730.355" y2="72" stroke="#6a6a6a" stroke-width="0.6"/>
<line x1="733.5887500000001" y1="70.2" x2="733.5887500000001" y2="72" stroke="#6a6a6a" stroke-width="0.6"/>
<line x1="736.8225000000001" y1="70.2" x2="736.8225000000001" y2="72" stroke="#6a6a6a" stroke-width="0.6"/>
<line x1="740.0562500000001" y1="70.2" x2="740.0562500000001" y2="72" stroke="#6a6a6a" stroke-width="0.6"/>
<line x1="743.29" y1="61" x2="743.29" y2="72" stroke="#6e6e6e" stroke-width="0.8"/>
<text x="745.0899999999999" y="71" font-size="8.5" fill="#bdbdbd" textLength="12" lengthAdjust="spacingAndGlyphs" stroke="#bdbdbd" stroke-width="0.25">3400</text>
<line x1="746.52375" y1="70.2" x2="746.52375" y2="72" stroke="#6a6a6a" stroke-width="0.6"/>
<line x1="749.7574999999999" y1="70.2" x2="749.7574999999999" y2="72" stroke="#6a6a6a" stroke-width="0.6"/>
<line x1="752.9912499999999" y1="70.2" x2="752.9912499999999" y2="72" stroke="#6a6a6a" stroke-width="0.6"/>
<line x1="756.2249999999999" y1="69" x2="756.2249999999999" y2="72" stroke="#6a6a6a" stroke-width="0.6"/>
<line x1="759.45875" y1="70.2" x2="759.45875" y2="72" stroke="#6a6a6a" stroke-width="0.6"/>
<line x1="762.6925" y1="70.2" x2="762.6925" y2="72" stroke="#6a6a6a" stroke-width="0.6"/>
<line x1="765.92625" y1="70.2" x2="765.92625" y2="72" stroke="#6a6a6a" stroke-width="0.6"/>
<line x1="769.1600000000001" y1="61" x2="769.1600000000001" y2="72" stroke="#6e6e6e" stroke-width="0.8"/>
<text x="770.96" y="71" font-size="8.5" fill="#bdbdbd" textLength="12" lengthAdjust="spacingAndGlyphs" stroke="#bdbdbd" stroke-width="0.25">3600</text>
<line x1="772.3937500000001" y1="70.2" x2="772.3937500000001" y2="72" stroke="#6a6a6a" stroke-width="0.6"/>
<line x1="775.6275" y1="70.2" x2="775.6275" y2="72" stroke="#6a6a6a" stroke-width="0.6"/>
<line x1="778.86125" y1="70.2" x2="778.86125" y2="72" stroke="#6a6a6a" stroke-width="0.6"/>
<line x1="782.095" y1="69" x2="782.095" y2="72" stroke="#6a6a6a" stroke-width="0.6"/>
<line x1="785.3287500000001" y1="70.2" x2="785.3287500000001" y2="72" stroke="#6a6a6a" stroke-width="0.6"/>
<line x1="788.5625000000001" y1="70.2" x2="788.5625000000001" y2="72" stroke="#6a6a6a" stroke-width="0.6"/>
<line x1="791.7962500000001" y1="70.2" x2="791.7962500000001" y2="72" stroke="#6a6a6a" stroke-width="0.6"/>
<line x1="795.03" y1="61" x2="795.03" y2="72" stroke="#6e6e6e" stroke-width="0.8"/>
<text x="796.8299999999999" y="71" font-size="8.5" fill="#bdbdbd" textLength="12" lengthAdjust="spacingAndGlyphs" stroke="#bdbdbd" stroke-width="0.25">3800</text>
<line x1="798.26375" y1="70.2" x2="798.26375" y2="72" stroke="#6a6a6a" stroke-width="0.6"/>
<line x1="801.4975" y1="70.2" x2="801.4975" y2="72" stroke="#6a6a6a" stroke-width="0.6"/>
<line x1="804.7312499999999" y1="70.2" x2="804.7312499999999" y2="72" stroke="#6a6a6a" stroke-width="0.6"/>
<line x1="807.9649999999999" y1="69" x2="807.9649999999999" y2="72" stroke="#6a6a6a" stroke-width="0.6"/>
<line x1="811.19875" y1="70.2" x2="811.19875" y2="72" stroke="#6a6a6a" stroke-width="0.6"/>
<line x1="814.4325" y1="70.2" x2="814.4325" y2="72" stroke="#6a6a6a" stroke-width="0.6"/>
<line x1="817.66625" y1="70.2" x2="817.66625" y2="72" stroke="#6a6a6a" stroke-width="0.6"/>
<line x1="820.9" y1="61" x2="820.9" y2="72" stroke="#6e6e6e" stroke-width="0.8"/>
<text x="822.6999999999999" y="71" font-size="8.5" fill="#bdbdbd" textLength="12" lengthAdjust="spacingAndGlyphs" stroke="#bdbdbd" stroke-width="0.25">4000</text>
<line x1="824.13375" y1="70.2" x2="824.13375" y2="72" stroke="#6a6a6a" stroke-width="0.6"/>
<line x1="827.3675" y1="70.2" x2="827.3675" y2="72" stroke="#6a6a6a" stroke-width="0.6"/>
<line x1="830.6012499999999" y1="70.2" x2="830.6012499999999" y2="72" stroke="#6a6a6a" stroke-width="0.6"/>
<line x1="833.8349999999999" y1="69" x2="833.8349999999999" y2="72" stroke="#6a6a6a" stroke-width="0.6"/>
<line x1="837.06875" y1="70.2" x2="837.06875" y2="72" stroke="#6a6a6a" stroke-width="0.6"/>
<line x1="840.3025" y1="70.2" x2="840.3025" y2="72" stroke="#6a6a6a" stroke-width="0.6"/>
<line x1="843.53625" y1="70.2" x2="843.53625" y2="72" stroke="#6a6a6a" stroke-width="0.6"/>
<line x1="846.77" y1="61" x2="846.77" y2="72" stroke="#6e6e6e" stroke-width="0.8"/>
<text x="848.5699999999999" y="71" font-size="8.5" fill="#bdbdbd" textLength="12" lengthAdjust="spacingAndGlyphs" stroke="#bdbdbd" stroke-width="0.25">4200</text>
<line x1="850.00375" y1="70.2" x2="850.00375" y2="72" stroke="#6a6a6a" stroke-width="0.6"/>
<line x1="853.2375" y1="70.2" x2="853.2375" y2="72" stroke="#6a6a6a" stroke-width="0.6"/>
<line x1="856.4712499999999" y1="70.2" x2="856.4712499999999" y2="72" stroke="#6a6a6a" stroke-width="0.6"/>
<rect x="25" y="73" width="10.5" height="639" fill="#4e4e4e"/>
<text x="27" y="80.48" font-size="8.5" fill="#bdbdbd" textLength="3.6" lengthAdjust="spacingAndGlyphs" stroke="#bdbdbd" stroke-width="0.25">8</text>
<text x="27" y="88.58" font-size="8.5" fill="#bdbdbd" textLength="3.6" lengthAdjust="spacingAndGlyphs" stroke="#bdbdbd" stroke-width="0.25">0</text>
<text x="27" y="96.68" font-size="8.5" fill="#bdbdbd" textLength="3.6" lengthAdjust="spacingAndGlyphs" stroke="#bdbdbd" stroke-width="0.25">0</text>
<line x1="33.2" y1="75.17125" x2="35" y2="75.17125" stroke="#6a6a6a" stroke-width="0.6"/>
<line x1="33.2" y1="78.7625" x2="35" y2="78.7625" stroke="#6a6a6a" stroke-width="0.6"/>
<line x1="33.2" y1="82.35374999999999" x2="35" y2="82.35374999999999" stroke="#6a6a6a" stroke-width="0.6"/>
<line x1="32" y1="85.945" x2="35" y2="85.945" stroke="#6a6a6a" stroke-width="0.6"/>
<line x1="33.2" y1="89.53625" x2="35" y2="89.53625" stroke="#6a6a6a" stroke-width="0.6"/>
<line x1="33.2" y1="93.1275" x2="35" y2="93.1275" stroke="#6a6a6a" stroke-width="0.6"/>
<line x1="33.2" y1="96.71875" x2="35" y2="96.71875" stroke="#6a6a6a" stroke-width="0.6"/>
<line x1="25" y1="100.31" x2="35" y2="100.31" stroke="#6e6e6e" stroke-width="0.8"/>
<text x="27" y="109.21000000000001" font-size="8.5" fill="#bdbdbd" textLength="3.6" lengthAdjust="spacingAndGlyphs" stroke="#bdbdbd" stroke-width="0.25">6</text>
<text x="27" y="117.31" font-size="8.5" fill="#bdbdbd" textLength="3.6" lengthAdjust="spacingAndGlyphs" stroke="#bdbdbd" stroke-width="0.25">0</text>
<text x="27" y="125.41000000000001" font-size="8.5" fill="#bdbdbd" textLength="3.6" lengthAdjust="spacingAndGlyphs" stroke="#bdbdbd" stroke-width="0.25">0</text>
<line x1="33.2" y1="103.90125" x2="35" y2="103.90125" stroke="#6a6a6a" stroke-width="0.6"/>
<line x1="33.2" y1="107.4925" x2="35" y2="107.4925" stroke="#6a6a6a" stroke-width="0.6"/>
<line x1="33.2" y1="111.08375000000001" x2="35" y2="111.08375000000001" stroke="#6a6a6a" stroke-width="0.6"/>
<line x1="32" y1="114.675" x2="35" y2="114.675" stroke="#6a6a6a" stroke-width="0.6"/>
<line x1="33.2" y1="118.26625" x2="35" y2="118.26625" stroke="#6a6a6a" stroke-width="0.6"/>
<line x1="33.2" y1="121.8575" x2="35" y2="121.8575" stroke="#6a6a6a" stroke-width="0.6"/>
<line x1="33.2" y1="125.44875" x2="35" y2="125.44875" stroke="#6a6a6a" stroke-width="0.6"/>
<line x1="25" y1="129.04" x2="35" y2="129.04" stroke="#6e6e6e" stroke-width="0.8"/>
<text x="27" y="137.94" font-size="8.5" fill="#bdbdbd" textLength="3.6" lengthAdjust="spacingAndGlyphs" stroke="#bdbdbd" stroke-width="0.25">4</text>
<text x="27" y="146.04" font-size="8.5" fill="#bdbdbd" textLength="3.6" lengthAdjust="spacingAndGlyphs" stroke="#bdbdbd" stroke-width="0.25">0</text>
<text x="27" y="154.14" font-size="8.5" fill="#bdbdbd" textLength="3.6" lengthAdjust="spacingAndGlyphs" stroke="#bdbdbd" stroke-width="0.25">0</text>
<line x1="33.2" y1="132.63125" x2="35" y2="132.63125" stroke="#6a6a6a" stroke-width="0.6"/>
<line x1="33.2" y1="136.2225" x2="35" y2="136.2225" stroke="#6a6a6a" stroke-width="0.6"/>
<line x1="33.2" y1="139.81375" x2="35" y2="139.81375" stroke="#6a6a6a" stroke-width="0.6"/>
<line x1="32" y1="143.405" x2="35" y2="143.405" stroke="#6a6a6a" stroke-width="0.6"/>
<line x1="33.2" y1="146.99625" x2="35" y2="146.99625" stroke="#6a6a6a" stroke-width="0.6"/>
<line x1="33.2" y1="150.58749999999998" x2="35" y2="150.58749999999998" stroke="#6a6a6a" stroke-width="0.6"/>
<line x1="33.2" y1="154.17874999999998" x2="35" y2="154.17874999999998" stroke="#6a6a6a" stroke-width="0.6"/>
<line x1="25" y1="157.77" x2="35" y2="157.77" stroke="#6e6e6e" stroke-width="0.8"/>
<text x="27" y="166.67000000000002" font-size="8.5" fill="#bdbdbd" textLength="3.6" lengthAdjust="spacingAndGlyphs" stroke="#bdbdbd" stroke-width="0.25">2</text>
<text x="27" y="174.77" font-size="8.5" fill="#bdbdbd" textLength="3.6" lengthAdjust="spacingAndGlyphs" stroke="#bdbdbd" stroke-width="0.25">0</text>
<text x="27" y="182.87" font-size="8.5" fill="#bdbdbd" textLength="3.6" lengthAdjust="spacingAndGlyphs" stroke="#bdbdbd" stroke-width="0.25">0</text>
<line x1="33.2" y1="161.36125" x2="35" y2="161.36125" stroke="#6a6a6a" stroke-width="0.6"/>
<line x1="33.2" y1="164.95250000000001" x2="35" y2="164.95250000000001" stroke="#6a6a6a" stroke-width="0.6"/>
<line x1="33.2" y1="168.54375000000002" x2="35" y2="168.54375000000002" stroke="#6a6a6a" stroke-width="0.6"/>
<line x1="32" y1="172.13500000000002" x2="35" y2="172.13500000000002" stroke="#6a6a6a" stroke-width="0.6"/>
<line x1="33.2" y1="175.72625000000002" x2="35" y2="175.72625000000002" stroke="#6a6a6a" stroke-width="0.6"/>
<line x1="33.2" y1="179.3175" x2="35" y2="179.3175" stroke="#6a6a6a" stroke-width="0.6"/>
<line x1="33.2" y1="182.90875" x2="35" y2="182.90875" stroke="#6a6a6a" stroke-width="0.6"/>
<line x1="25" y1="186.5" x2="35" y2="186.5" stroke="#6e6e6e" stroke-width="0.8"/>
<text x="27" y="195.4" font-size="8.5" fill="#bdbdbd" textLength="3.6" lengthAdjust="spacingAndGlyphs" stroke="#bdbdbd" stroke-width="0.25">0</text>
<line x1="33.2" y1="190.09125" x2="35" y2="190.09125" stroke="#6a6a6a" stroke-width="0.6"/>
<line x1="33.2" y1="193.6825" x2="35" y2="193.6825" stroke="#6a6a6a" stroke-width="0.6"/>
<line x1="33.2" y1="197.27375" x2="35" y2="197.27375" stroke="#6a6a6a" stroke-width="0.6"/>
<line x1="32" y1="200.865" x2="35" y2="200.865" stroke="#6a6a6a" stroke-width="0.6"/>
<line x1="33.2" y1="204.45625" x2="35" y2="204.45625" stroke="#6a6a6a" stroke-width="0.6"/>
<line x1="33.2" y1="208.0475" x2="35" y2="208.0475" stroke="#6a6a6a" stroke-width="0.6"/>
<line x1="33.2" y1="211.63875000000002" x2="35" y2="211.63875000000002" stroke="#6a6a6a" stroke-width="0.6"/>
<line x1="25" y1="215.23" x2="35" y2="215.23" stroke="#6e6e6e" stroke-width="0.8"/>
<text x="27" y="224.13" font-size="8.5" fill="#bdbdbd" textLength="3.6" lengthAdjust="spacingAndGlyphs" stroke="#bdbdbd" stroke-width="0.25">2</text>
<text x="27" y="232.23" font-size="8.5" fill="#bdbdbd" textLength="3.6" lengthAdjust="spacingAndGlyphs" stroke="#bdbdbd" stroke-width="0.25">0</text>
<text x="27" y="240.32999999999998" font-size="8.5" fill="#bdbdbd" textLength="3.6" lengthAdjust="spacingAndGlyphs" stroke="#bdbdbd" stroke-width="0.25">0</text>
<line x1="33.2" y1="218.82125" x2="35" y2="218.82125" stroke="#6a6a6a" stroke-width="0.6"/>
<line x1="33.2" y1="222.4125" x2="35" y2="222.4125" stroke="#6a6a6a" stroke-width="0.6"/>
<line x1="33.2" y1="226.00375" x2="35" y2="226.00375" stroke="#6a6a6a" stroke-width="0.6"/>
<line x1="32" y1="229.595" x2="35" y2="229.595" stroke="#6a6a6a" stroke-width="0.6"/>
<line x1="33.2" y1="233.18625" x2="35" y2="233.18625" stroke="#6a6a6a" stroke-width="0.6"/>
<line x1="33.2" y1="236.77749999999997" x2="35" y2="236.77749999999997" stroke="#6a6a6a" stroke-width="0.6"/>
<line x1="33.2" y1="240.36874999999998" x2="35" y2="240.36874999999998" stroke="#6a6a6a" stroke-width="0.6"/>
<line x1="25" y1="243.96" x2="35" y2="243.96" stroke="#6e6e6e" stroke-width="0.8"/>
<text x="27" y="252.86" font-size="8.5" fill="#bdbdbd" textLength="3.6" lengthAdjust="spacingAndGlyphs" stroke="#bdbdbd" stroke-width="0.25">4</text>
<text x="27" y="260.96000000000004" font-size="8.5" fill="#bdbdbd" textLength="3.6" lengthAdjust="spacingAndGlyphs" stroke="#bdbdbd" stroke-width="0.25">0</text>
<text x="27" y="269.06" font-size="8.5" fill="#bdbdbd" textLength="3.6" lengthAdjust="spacingAndGlyphs" stroke="#bdbdbd" stroke-width="0.25">0</text>
<line x1="33.2" y1="247.55125" x2="35" y2="247.55125" stroke="#6a6a6a" stroke-width="0.6"/>
<line x1="33.2" y1="251.1425" x2="35" y2="251.1425" stroke="#6a6a6a" stroke-width="0.6"/>
<line x1="33.2" y1="254.73375000000001" x2="35" y2="254.73375000000001" stroke="#6a6a6a" stroke-width="0.6"/>
<line x1="32" y1="258.325" x2="35" y2="258.325" stroke="#6a6a6a" stroke-width="0.6"/>
<line x1="33.2" y1="261.91625" x2="35" y2="261.91625" stroke="#6a6a6a" stroke-width="0.6"/>
<line x1="33.2" y1="265.5075" x2="35" y2="265.5075" stroke="#6a6a6a" stroke-width="0.6"/>
<line x1="33.2" y1="269.09875" x2="35" y2="269.09875" stroke="#6a6a6a" stroke-width="0.6"/>
<line x1="25" y1="272.69" x2="35" y2="272.69" stroke="#6e6e6e" stroke-width="0.8"/>
<text x="27" y="281.59" font-size="8.5" fill="#bdbdbd" textLength="3.6" lengthAdjust="spacingAndGlyphs" stroke="#bdbdbd" stroke-width="0.25">6</text>
<text x="27" y="289.69" font-size="8.5" fill="#bdbdbd" textLength="3.6" lengthAdjust="spacingAndGlyphs" stroke="#bdbdbd" stroke-width="0.25">0</text>
<text x="27" y="297.78999999999996" font-size="8.5" fill="#bdbdbd" textLength="3.6" lengthAdjust="spacingAndGlyphs" stroke="#bdbdbd" stroke-width="0.25">0</text>
<line x1="33.2" y1="276.28125" x2="35" y2="276.28125" stroke="#6a6a6a" stroke-width="0.6"/>
<line x1="33.2" y1="279.8725" x2="35" y2="279.8725" stroke="#6a6a6a" stroke-width="0.6"/>
<line x1="33.2" y1="283.46375" x2="35" y2="283.46375" stroke="#6a6a6a" stroke-width="0.6"/>
<line x1="32" y1="287.055" x2="35" y2="287.055" stroke="#6a6a6a" stroke-width="0.6"/>
<line x1="33.2" y1="290.64625" x2="35" y2="290.64625" stroke="#6a6a6a" stroke-width="0.6"/>
<line x1="33.2" y1="294.2375" x2="35" y2="294.2375" stroke="#6a6a6a" stroke-width="0.6"/>
<line x1="33.2" y1="297.82875" x2="35" y2="297.82875" stroke="#6a6a6a" stroke-width="0.6"/>
<line x1="25" y1="301.42" x2="35" y2="301.42" stroke="#6e6e6e" stroke-width="0.8"/>
<text x="27" y="310.32" font-size="8.5" fill="#bdbdbd" textLength="3.6" lengthAdjust="spacingAndGlyphs" stroke="#bdbdbd" stroke-width="0.25">8</text>
<text x="27" y="318.42" font-size="8.5" fill="#bdbdbd" textLength="3.6" lengthAdjust="spacingAndGlyphs" stroke="#bdbdbd" stroke-width="0.25">0</text>
<text x="27" y="326.52" font-size="8.5" fill="#bdbdbd" textLength="3.6" lengthAdjust="spacingAndGlyphs" stroke="#bdbdbd" stroke-width="0.25">0</text>
<line x1="33.2" y1="305.01125" x2="35" y2="305.01125" stroke="#6a6a6a" stroke-width="0.6"/>
<line x1="33.2" y1="308.6025" x2="35" y2="308.6025" stroke="#6a6a6a" stroke-width="0.6"/>
<line x1="33.2" y1="312.19375" x2="35" y2="312.19375" stroke="#6a6a6a" stroke-width="0.6"/>
<line x1="32" y1="315.785" x2="35" y2="315.785" stroke="#6a6a6a" stroke-width="0.6"/>
<line x1="33.2" y1="319.37625" x2="35" y2="319.37625" stroke="#6a6a6a" stroke-width="0.6"/>
<line x1="33.2" y1="322.96750000000003" x2="35" y2="322.96750000000003" stroke="#6a6a6a" stroke-width="0.6"/>
<line x1="33.2" y1="326.55875000000003" x2="35" y2="326.55875000000003" stroke="#6a6a6a" stroke-width="0.6"/>
<line x1="25" y1="330.15" x2="35" y2="330.15" stroke="#6e6e6e" stroke-width="0.8"/>
<text x="27" y="337.95" font-size="7.2" fill="#bdbdbd" textLength="3.6" lengthAdjust="spacingAndGlyphs" stroke="#bdbdbd" stroke-width="0.25">1</text>
<text x="27" y="344.84999999999997" font-size="7.2" fill="#bdbdbd" textLength="3.6" lengthAdjust="spacingAndGlyphs" stroke="#bdbdbd" stroke-width="0.25">0</text>
<text x="27" y="351.75" font-size="7.2" fill="#bdbdbd" textLength="3.6" lengthAdjust="spacingAndGlyphs" stroke="#bdbdbd" stroke-width="0.25">0</text>
<text x="27" y="358.65" font-size="7.2" fill="#bdbdbd" textLength="3.6" lengthAdjust="spacingAndGlyphs" stroke="#bdbdbd" stroke-width="0.25">0</text>
<line x1="33.2" y1="333.74125" x2="35" y2="333.74125" stroke="#6a6a6a" stroke-width="0.6"/>
<line x1="33.2" y1="337.3325" x2="35" y2="337.3325" stroke="#6a6a6a" stroke-width="0.6"/>
<line x1="33.2" y1="340.92375" x2="35" y2="340.92375" stroke="#6a6a6a" stroke-width="0.6"/>
<line x1="32" y1="344.515" x2="35" y2="344.515" stroke="#6a6a6a" stroke-width="0.6"/>
<line x1="33.2" y1="348.10625" x2="35" y2="348.10625" stroke="#6a6a6a" stroke-width="0.6"/>
<line x1="33.2" y1="351.6975" x2="35" y2="351.6975" stroke="#6a6a6a" stroke-width="0.6"/>
<line x1="33.2" y1="355.28875" x2="35" y2="355.28875" stroke="#6a6a6a" stroke-width="0.6"/>
<line x1="25" y1="358.88" x2="35" y2="358.88" stroke="#6e6e6e" stroke-width="0.8"/>
<text x="27" y="366.68" font-size="7.2" fill="#bdbdbd" textLength="3.6" lengthAdjust="spacingAndGlyphs" stroke="#bdbdbd" stroke-width="0.25">1</text>
<text x="27" y="373.58" font-size="7.2" fill="#bdbdbd" textLength="3.6" lengthAdjust="spacingAndGlyphs" stroke="#bdbdbd" stroke-width="0.25">2</text>
<text x="27" y="380.48" font-size="7.2" fill="#bdbdbd" textLength="3.6" lengthAdjust="spacingAndGlyphs" stroke="#bdbdbd" stroke-width="0.25">0</text>
<text x="27" y="387.38" font-size="7.2" fill="#bdbdbd" textLength="3.6" lengthAdjust="spacingAndGlyphs" stroke="#bdbdbd" stroke-width="0.25">0</text>
<line x1="33.2" y1="362.47125" x2="35" y2="362.47125" stroke="#6a6a6a" stroke-width="0.6"/>
<line x1="33.2" y1="366.0625" x2="35" y2="366.0625" stroke="#6a6a6a" stroke-width="0.6"/>
<line x1="33.2" y1="369.65375" x2="35" y2="369.65375" stroke="#6a6a6a" stroke-width="0.6"/>
<line x1="32" y1="373.245" x2="35" y2="373.245" stroke="#6a6a6a" stroke-width="0.6"/>
<line x1="33.2" y1="376.83625" x2="35" y2="376.83625" stroke="#6a6a6a" stroke-width="0.6"/>
<line x1="33.2" y1="380.4275" x2="35" y2="380.4275" stroke="#6a6a6a" stroke-width="0.6"/>
<line x1="33.2" y1="384.01875" x2="35" y2="384.01875" stroke="#6a6a6a" stroke-width="0.6"/>
<line x1="25" y1="387.61" x2="35" y2="387.61" stroke="#6e6e6e" stroke-width="0.8"/>
<text x="27" y="395.41" font-size="7.2" fill="#bdbdbd" textLength="3.6" lengthAdjust="spacingAndGlyphs" stroke="#bdbdbd" stroke-width="0.25">1</text>
<text x="27" y="402.31" font-size="7.2" fill="#bdbdbd" textLength="3.6" lengthAdjust="spacingAndGlyphs" stroke="#bdbdbd" stroke-width="0.25">4</text>
<text x="27" y="409.21000000000004" font-size="7.2" fill="#bdbdbd" textLength="3.6" lengthAdjust="spacingAndGlyphs" stroke="#bdbdbd" stroke-width="0.25">0</text>
<text x="27" y="416.11" font-size="7.2" fill="#bdbdbd" textLength="3.6" lengthAdjust="spacingAndGlyphs" stroke="#bdbdbd" stroke-width="0.25">0</text>
<line x1="33.2" y1="391.20125" x2="35" y2="391.20125" stroke="#6a6a6a" stroke-width="0.6"/>
<line x1="33.2" y1="394.7925" x2="35" y2="394.7925" stroke="#6a6a6a" stroke-width="0.6"/>
<line x1="33.2" y1="398.38375" x2="35" y2="398.38375" stroke="#6a6a6a" stroke-width="0.6"/>
<line x1="32" y1="401.975" x2="35" y2="401.975" stroke="#6a6a6a" stroke-width="0.6"/>
<line x1="33.2" y1="405.56625" x2="35" y2="405.56625" stroke="#6a6a6a" stroke-width="0.6"/>
<line x1="33.2" y1="409.1575" x2="35" y2="409.1575" stroke="#6a6a6a" stroke-width="0.6"/>
<line x1="33.2" y1="412.74875000000003" x2="35" y2="412.74875000000003" stroke="#6a6a6a" stroke-width="0.6"/>
<line x1="25" y1="416.34000000000003" x2="35" y2="416.34000000000003" stroke="#6e6e6e" stroke-width="0.8"/>
<text x="27" y="424.14000000000004" font-size="7.2" fill="#bdbdbd" textLength="3.6" lengthAdjust="spacingAndGlyphs" stroke="#bdbdbd" stroke-width="0.25">1</text>
<text x="27" y="431.04" font-size="7.2" fill="#bdbdbd" textLength="3.6" lengthAdjust="spacingAndGlyphs" stroke="#bdbdbd" stroke-width="0.25">6</text>
<text x="27" y="437.94000000000005" font-size="7.2" fill="#bdbdbd" textLength="3.6" lengthAdjust="spacingAndGlyphs" stroke="#bdbdbd" stroke-width="0.25">0</text>
<text x="27" y="444.84000000000003" font-size="7.2" fill="#bdbdbd" textLength="3.6" lengthAdjust="spacingAndGlyphs" stroke="#bdbdbd" stroke-width="0.25">0</text>
<line x1="33.2" y1="419.93125000000003" x2="35" y2="419.93125000000003" stroke="#6a6a6a" stroke-width="0.6"/>
<line x1="33.2" y1="423.52250000000004" x2="35" y2="423.52250000000004" stroke="#6a6a6a" stroke-width="0.6"/>
<line x1="33.2" y1="427.11375000000004" x2="35" y2="427.11375000000004" stroke="#6a6a6a" stroke-width="0.6"/>
<line x1="32" y1="430.70500000000004" x2="35" y2="430.70500000000004" stroke="#6a6a6a" stroke-width="0.6"/>
<line x1="33.2" y1="434.29625000000004" x2="35" y2="434.29625000000004" stroke="#6a6a6a" stroke-width="0.6"/>
<line x1="33.2" y1="437.88750000000005" x2="35" y2="437.88750000000005" stroke="#6a6a6a" stroke-width="0.6"/>
<line x1="33.2" y1="441.47875000000005" x2="35" y2="441.47875000000005" stroke="#6a6a6a" stroke-width="0.6"/>
<line x1="25" y1="445.07" x2="35" y2="445.07" stroke="#6e6e6e" stroke-width="0.8"/>
<text x="27" y="452.87" font-size="7.2" fill="#bdbdbd" textLength="3.6" lengthAdjust="spacingAndGlyphs" stroke="#bdbdbd" stroke-width="0.25">1</text>
<text x="27" y="459.77" font-size="7.2" fill="#bdbdbd" textLength="3.6" lengthAdjust="spacingAndGlyphs" stroke="#bdbdbd" stroke-width="0.25">8</text>
<text x="27" y="466.67" font-size="7.2" fill="#bdbdbd" textLength="3.6" lengthAdjust="spacingAndGlyphs" stroke="#bdbdbd" stroke-width="0.25">0</text>
<text x="27" y="473.57" font-size="7.2" fill="#bdbdbd" textLength="3.6" lengthAdjust="spacingAndGlyphs" stroke="#bdbdbd" stroke-width="0.25">0</text>
<line x1="33.2" y1="448.66125" x2="35" y2="448.66125" stroke="#6a6a6a" stroke-width="0.6"/>
<line x1="33.2" y1="452.2525" x2="35" y2="452.2525" stroke="#6a6a6a" stroke-width="0.6"/>
<line x1="33.2" y1="455.84375" x2="35" y2="455.84375" stroke="#6a6a6a" stroke-width="0.6"/>
<line x1="32" y1="459.435" x2="35" y2="459.435" stroke="#6a6a6a" stroke-width="0.6"/>
<line x1="33.2" y1="463.02625" x2="35" y2="463.02625" stroke="#6a6a6a" stroke-width="0.6"/>
<line x1="33.2" y1="466.6175" x2="35" y2="466.6175" stroke="#6a6a6a" stroke-width="0.6"/>
<line x1="33.2" y1="470.20875" x2="35" y2="470.20875" stroke="#6a6a6a" stroke-width="0.6"/>
<line x1="25" y1="473.8" x2="35" y2="473.8" stroke="#6e6e6e" stroke-width="0.8"/>
<text x="27" y="481.6" font-size="7.2" fill="#bdbdbd" textLength="3.6" lengthAdjust="spacingAndGlyphs" stroke="#bdbdbd" stroke-width="0.25">2</text>
<text x="27" y="488.5" font-size="7.2" fill="#bdbdbd" textLength="3.6" lengthAdjust="spacingAndGlyphs" stroke="#bdbdbd" stroke-width="0.25">0</text>
<text x="27" y="495.40000000000003" font-size="7.2" fill="#bdbdbd" textLength="3.6" lengthAdjust="spacingAndGlyphs" stroke="#bdbdbd" stroke-width="0.25">0</text>
<text x="27" y="502.3" font-size="7.2" fill="#bdbdbd" textLength="3.6" lengthAdjust="spacingAndGlyphs" stroke="#bdbdbd" stroke-width="0.25">0</text>
<line x1="33.2" y1="477.39125" x2="35" y2="477.39125" stroke="#6a6a6a" stroke-width="0.6"/>
<line x1="33.2" y1="480.9825" x2="35" y2="480.9825" stroke="#6a6a6a" stroke-width="0.6"/>
<line x1="33.2" y1="484.57375" x2="35" y2="484.57375" stroke="#6a6a6a" stroke-width="0.6"/>
<line x1="32" y1="488.165" x2="35" y2="488.165" stroke="#6a6a6a" stroke-width="0.6"/>
<line x1="33.2" y1="491.75625" x2="35" y2="491.75625" stroke="#6a6a6a" stroke-width="0.6"/>
<line x1="33.2" y1="495.3475" x2="35" y2="495.3475" stroke="#6a6a6a" stroke-width="0.6"/>
<line x1="33.2" y1="498.93875" x2="35" y2="498.93875" stroke="#6a6a6a" stroke-width="0.6"/>
<line x1="25" y1="502.53000000000003" x2="35" y2="502.53000000000003" stroke="#6e6e6e" stroke-width="0.8"/>
<text x="27" y="510.33000000000004" font-size="7.2" fill="#bdbdbd" textLength="3.6" lengthAdjust="spacingAndGlyphs" stroke="#bdbdbd" stroke-width="0.25">2</text>
<text x="27" y="517.23" font-size="7.2" fill="#bdbdbd" textLength="3.6" lengthAdjust="spacingAndGlyphs" stroke="#bdbdbd" stroke-width="0.25">2</text>
<text x="27" y="524.13" font-size="7.2" fill="#bdbdbd" textLength="3.6" lengthAdjust="spacingAndGlyphs" stroke="#bdbdbd" stroke-width="0.25">0</text>
<text x="27" y="531.0300000000001" font-size="7.2" fill="#bdbdbd" textLength="3.6" lengthAdjust="spacingAndGlyphs" stroke="#bdbdbd" stroke-width="0.25">0</text>
<line x1="33.2" y1="506.12125000000003" x2="35" y2="506.12125000000003" stroke="#6a6a6a" stroke-width="0.6"/>
<line x1="33.2" y1="509.71250000000003" x2="35" y2="509.71250000000003" stroke="#6a6a6a" stroke-width="0.6"/>
<line x1="33.2" y1="513.30375" x2="35" y2="513.30375" stroke="#6a6a6a" stroke-width="0.6"/>
<line x1="32" y1="516.895" x2="35" y2="516.895" stroke="#6a6a6a" stroke-width="0.6"/>
<line x1="33.2" y1="520.48625" x2="35" y2="520.48625" stroke="#6a6a6a" stroke-width="0.6"/>
<line x1="33.2" y1="524.0775" x2="35" y2="524.0775" stroke="#6a6a6a" stroke-width="0.6"/>
<line x1="33.2" y1="527.66875" x2="35" y2="527.66875" stroke="#6a6a6a" stroke-width="0.6"/>
<line x1="25" y1="531.26" x2="35" y2="531.26" stroke="#6e6e6e" stroke-width="0.8"/>
<text x="27" y="539.06" font-size="7.2" fill="#bdbdbd" textLength="3.6" lengthAdjust="spacingAndGlyphs" stroke="#bdbdbd" stroke-width="0.25">2</text>
<text x="27" y="545.9599999999999" font-size="7.2" fill="#bdbdbd" textLength="3.6" lengthAdjust="spacingAndGlyphs" stroke="#bdbdbd" stroke-width="0.25">4</text>
<text x="27" y="552.8599999999999" font-size="7.2" fill="#bdbdbd" textLength="3.6" lengthAdjust="spacingAndGlyphs" stroke="#bdbdbd" stroke-width="0.25">0</text>
<text x="27" y="559.76" font-size="7.2" fill="#bdbdbd" textLength="3.6" lengthAdjust="spacingAndGlyphs" stroke="#bdbdbd" stroke-width="0.25">0</text>
<line x1="33.2" y1="534.8512499999999" x2="35" y2="534.8512499999999" stroke="#6a6a6a" stroke-width="0.6"/>
<line x1="33.2" y1="538.4425" x2="35" y2="538.4425" stroke="#6a6a6a" stroke-width="0.6"/>
<line x1="33.2" y1="542.0337499999999" x2="35" y2="542.0337499999999" stroke="#6a6a6a" stroke-width="0.6"/>
<line x1="32" y1="545.625" x2="35" y2="545.625" stroke="#6a6a6a" stroke-width="0.6"/>
<line x1="33.2" y1="549.21625" x2="35" y2="549.21625" stroke="#6a6a6a" stroke-width="0.6"/>
<line x1="33.2" y1="552.8075" x2="35" y2="552.8075" stroke="#6a6a6a" stroke-width="0.6"/>
<line x1="33.2" y1="556.39875" x2="35" y2="556.39875" stroke="#6a6a6a" stroke-width="0.6"/>
<line x1="25" y1="559.99" x2="35" y2="559.99" stroke="#6e6e6e" stroke-width="0.8"/>
<text x="27" y="567.79" font-size="7.2" fill="#bdbdbd" textLength="3.6" lengthAdjust="spacingAndGlyphs" stroke="#bdbdbd" stroke-width="0.25">2</text>
<text x="27" y="574.6899999999999" font-size="7.2" fill="#bdbdbd" textLength="3.6" lengthAdjust="spacingAndGlyphs" stroke="#bdbdbd" stroke-width="0.25">6</text>
<text x="27" y="581.5899999999999" font-size="7.2" fill="#bdbdbd" textLength="3.6" lengthAdjust="spacingAndGlyphs" stroke="#bdbdbd" stroke-width="0.25">0</text>
<text x="27" y="588.49" font-size="7.2" fill="#bdbdbd" textLength="3.6" lengthAdjust="spacingAndGlyphs" stroke="#bdbdbd" stroke-width="0.25">0</text>
<line x1="33.2" y1="563.58125" x2="35" y2="563.58125" stroke="#6a6a6a" stroke-width="0.6"/>
<line x1="33.2" y1="567.1725" x2="35" y2="567.1725" stroke="#6a6a6a" stroke-width="0.6"/>
<line x1="33.2" y1="570.76375" x2="35" y2="570.76375" stroke="#6a6a6a" stroke-width="0.6"/>
<line x1="32" y1="574.355" x2="35" y2="574.355" stroke="#6a6a6a" stroke-width="0.6"/>
<line x1="33.2" y1="577.94625" x2="35" y2="577.94625" stroke="#6a6a6a" stroke-width="0.6"/>
<line x1="33.2" y1="581.5375" x2="35" y2="581.5375" stroke="#6a6a6a" stroke-width="0.6"/>
<line x1="33.2" y1="585.12875" x2="35" y2="585.12875" stroke="#6a6a6a" stroke-width="0.6"/>
<line x1="25" y1="588.72" x2="35" y2="588.72" stroke="#6e6e6e" stroke-width="0.8"/>
<text x="27" y="596.52" font-size="7.2" fill="#bdbdbd" textLength="3.6" lengthAdjust="spacingAndGlyphs" stroke="#bdbdbd" stroke-width="0.25">2</text>
<text x="27" y="603.42" font-size="7.2" fill="#bdbdbd" textLength="3.6" lengthAdjust="spacingAndGlyphs" stroke="#bdbdbd" stroke-width="0.25">8</text>
<text x="27" y="610.3199999999999" font-size="7.2" fill="#bdbdbd" textLength="3.6" lengthAdjust="spacingAndGlyphs" stroke="#bdbdbd" stroke-width="0.25">0</text>
<text x="27" y="617.22" font-size="7.2" fill="#bdbdbd" textLength="3.6" lengthAdjust="spacingAndGlyphs" stroke="#bdbdbd" stroke-width="0.25">0</text>
<line x1="33.2" y1="592.31125" x2="35" y2="592.31125" stroke="#6a6a6a" stroke-width="0.6"/>
<line x1="33.2" y1="595.9025" x2="35" y2="595.9025" stroke="#6a6a6a" stroke-width="0.6"/>
<line x1="33.2" y1="599.49375" x2="35" y2="599.49375" stroke="#6a6a6a" stroke-width="0.6"/>
<line x1="32" y1="603.085" x2="35" y2="603.085" stroke="#6a6a6a" stroke-width="0.6"/>
<line x1="33.2" y1="606.67625" x2="35" y2="606.67625" stroke="#6a6a6a" stroke-width="0.6"/>
<line x1="33.2" y1="610.2675" x2="35" y2="610.2675" stroke="#6a6a6a" stroke-width="0.6"/>
<line x1="33.2" y1="613.85875" x2="35" y2="613.85875" stroke="#6a6a6a" stroke-width="0.6"/>
<line x1="25" y1="617.45" x2="35" y2="617.45" stroke="#6e6e6e" stroke-width="0.8"/>
<text x="27" y="625.25" font-size="7.2" fill="#bdbdbd" textLength="3.6" lengthAdjust="spacingAndGlyphs" stroke="#bdbdbd" stroke-width="0.25">3</text>
<text x="27" y="632.15" font-size="7.2" fill="#bdbdbd" textLength="3.6" lengthAdjust="spacingAndGlyphs" stroke="#bdbdbd" stroke-width="0.25">0</text>
<text x="27" y="639.05" font-size="7.2" fill="#bdbdbd" textLength="3.6" lengthAdjust="spacingAndGlyphs" stroke="#bdbdbd" stroke-width="0.25">0</text>
<text x="27" y="645.95" font-size="7.2" fill="#bdbdbd" textLength="3.6" lengthAdjust="spacingAndGlyphs" stroke="#bdbdbd" stroke-width="0.25">0</text>
<line x1="33.2" y1="621.04125" x2="35" y2="621.04125" stroke="#6a6a6a" stroke-width="0.6"/>
<line x1="33.2" y1="624.6325" x2="35" y2="624.6325" stroke="#6a6a6a" stroke-width="0.6"/>
<line x1="33.2" y1="628.22375" x2="35" y2="628.22375" stroke="#6a6a6a" stroke-width="0.6"/>
<line x1="32" y1="631.815" x2="35" y2="631.815" stroke="#6a6a6a" stroke-width="0.6"/>
<line x1="33.2" y1="635.40625" x2="35" y2="635.40625" stroke="#6a6a6a" stroke-width="0.6"/>
<line x1="33.2" y1="638.9975000000001" x2="35" y2="638.9975000000001" stroke="#6a6a6a" stroke-width="0.6"/>
<line x1="33.2" y1="642.58875" x2="35" y2="642.58875" stroke="#6a6a6a" stroke-width="0.6"/>
<line x1="25" y1="646.1800000000001" x2="35" y2="646.1800000000001" stroke="#6e6e6e" stroke-width="0.8"/>
<text x="27" y="653.98" font-size="7.2" fill="#bdbdbd" textLength="3.6" lengthAdjust="spacingAndGlyphs" stroke="#bdbdbd" stroke-width="0.25">3</text>
<text x="27" y="660.88" font-size="7.2" fill="#bdbdbd" textLength="3.6" lengthAdjust="spacingAndGlyphs" stroke="#bdbdbd" stroke-width="0.25">2</text>
<text x="27" y="667.78" font-size="7.2" fill="#bdbdbd" textLength="3.6" lengthAdjust="spacingAndGlyphs" stroke="#bdbdbd" stroke-width="0.25">0</text>
<text x="27" y="674.6800000000001" font-size="7.2" fill="#bdbdbd" textLength="3.6" lengthAdjust="spacingAndGlyphs" stroke="#bdbdbd" stroke-width="0.25">0</text>
<line x1="33.2" y1="649.77125" x2="35" y2="649.77125" stroke="#6a6a6a" stroke-width="0.6"/>
<line x1="33.2" y1="653.3625000000001" x2="35" y2="653.3625000000001" stroke="#6a6a6a" stroke-width="0.6"/>
<line x1="33.2" y1="656.95375" x2="35" y2="656.95375" stroke="#6a6a6a" stroke-width="0.6"/>
<line x1="32" y1="660.5450000000001" x2="35" y2="660.5450000000001" stroke="#6a6a6a" stroke-width="0.6"/>
<line x1="33.2" y1="664.13625" x2="35" y2="664.13625" stroke="#6a6a6a" stroke-width="0.6"/>
<line x1="33.2" y1="667.7275000000001" x2="35" y2="667.7275000000001" stroke="#6a6a6a" stroke-width="0.6"/>
<line x1="33.2" y1="671.31875" x2="35" y2="671.31875" stroke="#6a6a6a" stroke-width="0.6"/>
<line x1="25" y1="674.9100000000001" x2="35" y2="674.9100000000001" stroke="#6e6e6e" stroke-width="0.8"/>
<text x="27" y="682.71" font-size="7.2" fill="#bdbdbd" textLength="3.6" lengthAdjust="spacingAndGlyphs" stroke="#bdbdbd" stroke-width="0.25">3</text>
<text x="27" y="689.61" font-size="7.2" fill="#bdbdbd" textLength="3.6" lengthAdjust="spacingAndGlyphs" stroke="#bdbdbd" stroke-width="0.25">4</text>
<text x="27" y="696.51" font-size="7.2" fill="#bdbdbd" textLength="3.6" lengthAdjust="spacingAndGlyphs" stroke="#bdbdbd" stroke-width="0.25">0</text>
<text x="27" y="703.4100000000001" font-size="7.2" fill="#bdbdbd" textLength="3.6" lengthAdjust="spacingAndGlyphs" stroke="#bdbdbd" stroke-width="0.25">0</text>
<line x1="33.2" y1="678.50125" x2="35" y2="678.50125" stroke="#6a6a6a" stroke-width="0.6"/>
<line x1="33.2" y1="682.0925000000001" x2="35" y2="682.0925000000001" stroke="#6a6a6a" stroke-width="0.6"/>
<line x1="33.2" y1="685.68375" x2="35" y2="685.68375" stroke="#6a6a6a" stroke-width="0.6"/>
<line x1="32" y1="689.2750000000001" x2="35" y2="689.2750000000001" stroke="#6a6a6a" stroke-width="0.6"/>
<line x1="33.2" y1="692.86625" x2="35" y2="692.86625" stroke="#6a6a6a" stroke-width="0.6"/>
<line x1="33.2" y1="696.4575000000001" x2="35" y2="696.4575000000001" stroke="#6a6a6a" stroke-width="0.6"/>
<line x1="33.2" y1="700.04875" x2="35" y2="700.04875" stroke="#6a6a6a" stroke-width="0.6"/>
<line x1="25" y1="703.64" x2="35" y2="703.64" stroke="#6e6e6e" stroke-width="0.8"/>
<line x1="33.2" y1="707.2312499999999" x2="35" y2="707.2312499999999" stroke="#6a6a6a" stroke-width="0.6"/>
<line x1="33.2" y1="710.8225" x2="35" y2="710.8225" stroke="#6a6a6a" stroke-width="0.6"/>
<rect x="36" y="73" width="821.5" height="638" fill="#323232"/>
<rect x="25" y="712" width="835" height="8" fill="#4f4f4f"/>
<text x="30.5" y="720.5" font-size="8" fill="#d4d4d4" textLength="20" lengthAdjust="spacingAndGlyphs" stroke="#d4d4d4" stroke-width="0.25">20.66%</text>
<text x="70" y="720.5" font-size="8" fill="#d4d4d4" textLength="78" lengthAdjust="spacingAndGlyphs" stroke="#d4d4d4" stroke-width="0.25">2232 px x 2854 px (250 ppi)</text>
<text x="164" y="720.5" font-size="8" fill="#d4d4d4" stroke="#d4d4d4" stroke-width="0.25">)</text>
<rect x="3" y="62.3" width="18.5" height="14.5" fill="#3a3a3a"/>
<path d="M8.0,70 L16.0,70 M12,66.0 L12,74.0" fill="none" stroke="#f0f0f0" stroke-width="1.0"/>
<path d="M6.8,70 L9.0,68.2 L9.0,71.8 Z M17.2,70 L15.0,68.2 L15.0,71.8 Z M12,64.8 L10.2,67.0 L13.8,67.0 Z M12,75.2 L10.2,73.0 L13.8,73.0 Z" fill="#f0f0f0"/>
<path d="M19.5,76 L21.5,76 L21.5,74 Z" fill="#9a9a9a"/>
<rect x="7.5" y="83" width="10" height="8.5" fill="none" stroke="#d6d6d6" stroke-width="1" stroke-dasharray="1.6,1.2"/>
<path d="M19,93 L21,93 L21,91 Z" fill="#9a9a9a"/>
<path d="M7,99 C10,101 13,99 17,100 L14,105 L17,110 C13,108 10,109 8,111 L10,105 Z" fill="none" stroke="#d6d6d6" stroke-width="1.1"/>
<path d="M19,112 L21,112 L21,110 Z" fill="#9a9a9a"/>
<rect x="7" y="117" width="6" height="6" fill="none" stroke="#d6d6d6" stroke-width="1"/>
<rect x="8" y="118" width="3.5" height="3.5" fill="#d6d6d6"/>
<path d="M12.5,121 L12.5,129 L14.5,127 L17,130 L18,129 L15.5,126 L18,125.5 Z" fill="#d6d6d6"/>
<path d="M19,130 L21,130 L21,128 Z" fill="#9a9a9a"/>
<path d="M9,134 L9,146 L19,146 M6,137 L17,137 L17,148" fill="none" stroke="#d6d6d6" stroke-width="1.4"/>
<path d="M21,149 L23,149 L23,147 Z" fill="#9a9a9a"/>
<rect x="7.5" y="154" width="10" height="10" fill="none" stroke="#d6d6d6" stroke-width="1.1"/>
<path d="M7.5,154 L17.5,164 M17.5,154 L7.5,164" fill="none" stroke="#d6d6d6" stroke-width="0.8"/>
<path d="M15,174 C16,172.5 18,172.5 19,174 C20,175 19.5,176.5 18.5,177.5 L17,179 L15,177 L16.5,175.5 Z" fill="#d6d6d6"/>
<path d="M15.5,177.5 L9,184 L7.5,184.5 L8,183 L14.5,176.5" fill="none" stroke="#d6d6d6" stroke-width="1.1"/>
<path d="M19,186 L21,186 L21,184 Z" fill="#9a9a9a"/>
<path d="M7.5,199 L15,191 C16,190 17.5,190 18.5,191 C19.5,192 19.5,193.5 18.5,194.5 L11,202 C10,203 8.5,203 7.5,202 C6.5,201 6.5,200 7.5,199 Z" fill="#d6d6d6"/>
<circle cx="12" cy="195.5" r="0.5" fill="#535353"/>
<circle cx="13.5" cy="197" r="0.5" fill="#535353"/>
<circle cx="11.5" cy="197.5" r="0.5" fill="#535353"/>
<path d="M19,204 L21,204 L21,202 Z" fill="#9a9a9a"/>
<path d="M8,221 C8,218.5 9,217 11,216.5 L17.5,209.5 L18.5,210.5 L12,217.5 C12,219.5 10.5,221 8,221 Z" fill="#d6d6d6"/>
<path d="M19,223 L21,223 L21,221 Z" fill="#9a9a9a"/>
<path d="M10.5,229 C10.5,226.5 13.5,226.5 13.5,229 L12.8,232 L16.5,233 C17.5,233.3 17.5,234 17.5,235 L17.5,236 L6.5,236 L6.5,235 C6.5,234 6.5,233.3 7.5,233 L11.2,232 Z" fill="#d6d6d6"/>
<line x1="6.5" y1="238" x2="17.5" y2="238" stroke="#d6d6d6" stroke-width="0.9"/>
<path d="M19,240 L21,240 L21,238 Z" fill="#9a9a9a"/>
<path d="M8,257 C8,254.5 9,253 11,252.5 L17.5,245.5 L18.5,246.5 L12,253.5 C12,255.5 10.5,257 8,257 Z" fill="#d6d6d6"/>
<path d="M6.5,251 C6.5,247.5 9,246 12,247" fill="none" stroke="#d6d6d6" stroke-width="0.9"/>
<path d="M11,245.5 L12.5,247 L10.5,248.5" fill="none" stroke="#d6d6d6" stroke-width="0.8"/>
<path d="M19,259 L21,259 L21,257 Z" fill="#9a9a9a"/>
<path d="M7.5,270 L14,263.5 C15,262.5 16,262.5 17,263.5 L18.5,265 C19.5,266 19.5,267 18.5,268 L13,273.5 L9,273.5 L7.5,272 C6.8,271.3 6.8,270.7 7.5,270 Z" fill="#d6d6d6"/>
<path d="M10,267.5 L14,271.5" fill="none" stroke="#535353" stroke-width="0.7"/>
<path d="M19,275 L21,275 L21,273 Z" fill="#9a9a9a"/>
<defs><linearGradient id="gr" x1="0" x2="1"><stop offset="0" stop-color="#3a3a3a"/><stop offset="1" stop-color="#e8e8e8"/></linearGradient></defs>
<rect x="7.5" y="280" width="10" height="9" fill="url(#gr)" stroke="#d6d6d6" stroke-width="1"/>
<path d="M19,292 L21,292 L21,290 Z" fill="#9a9a9a"/>
<path d="M12,297 C15,301 16,303 16,305 C16,308 14,309 12,309 C10,309 8,308 8,305 C8,303 9,301 12,297 Z" fill="#d6d6d6"/>
<circle cx="13" cy="318" r="4" fill="#d6d6d6"/>
<line x1="10" y1="321" x2="7" y2="326" stroke="#d6d6d6" stroke-width="1.6"/>
<path d="M19,328 L21,328 L21,326 Z" fill="#9a9a9a"/>
<path d="M8,344 L10,337 L15,334 L18,337 L15,342 Z" fill="none" stroke="#d6d6d6" stroke-width="1.1"/>
<line x1="12" y1="339" x2="15" y2="337" stroke="#d6d6d6" stroke-width="0.8"/>
<path d="M19,346 L21,346 L21,344 Z" fill="#9a9a9a"/>
<text x="7.5" y="364" font-size="14" fill="#d6d6d6" font-weight="bold" font-family="Liberation Serif">T</text>
<path d="M19,364 L21,364 L21,362 Z" fill="#9a9a9a"/>
<path d="M9,369 L9,383 L12,380 L15,385 L17,384 L14,379 L18,378.5 Z" fill="#d6d6d6"/>
<path d="M19,384 L21,384 L21,382 Z" fill="#9a9a9a"/>
<rect x="7" y="390" width="11" height="8" fill="none" stroke="#d6d6d6" stroke-width="1.2"/>
<path d="M19,400 L21,400 L21,398 Z" fill="#9a9a9a"/>
<g transform="translate(12.5,413) rotate(-25) scale(0.78) translate(-12.5,-412.5)">
<path d="M9,418 L7,412 C7,410 9,410 9,412 L10,414 L10,407 C10,405.5 12,405.5 12,407 L12,412 L12,406 C12,404.5 14,404.5 14,406 L14,412 L14,407 C14,405.5 16,405.5 16,407 L16,412 L16,409 C16,407.5 18,407.5 18,409 L18,415 C18,418 16,420 13,420 Z" fill="#d6d6d6"/>
</g>
<path d="M9,407.5 C11,405.5 15,405.5 17,407.5" fill="none" stroke="#d6d6d6" stroke-width="0.9"/>
<path d="M16,405.8 L17.5,407.8 L15.2,408.3" fill="none" stroke="#d6d6d6" stroke-width="0.8"/>
<circle cx="11.2" cy="430" r="3.7" fill="none" stroke="#d6d6d6" stroke-width="1.3"/>
<line x1="13.9" y1="432.7" x2="17" y2="436" stroke="#d6d6d6" stroke-width="1.8"/>
<circle cx="8" cy="450" r="1.1" fill="#d6d6d6"/>
<circle cx="12" cy="450" r="1.1" fill="#d6d6d6"/>
<circle cx="16" cy="450" r="1.1" fill="#d6d6d6"/>
<path d="M19,453 L21,453 L21,451 Z" fill="#9a9a9a"/>
<rect x="5" y="458.5" width="4" height="4" fill="#f4f4f4" stroke="#333" stroke-width="0.5"/>
<rect x="3" y="456.5" width="4" height="4" fill="#111" stroke="#ddd" stroke-width="0.5"/>
<path d="M14,457 C17,457 18,458 18,461 M16,459.5 L18,461.5 L20,459.5 M13,457 L15,455.5 M13,457 L15,458.5" fill="none" stroke="#d6d6d6" stroke-width="0.8"/>
<rect x="9" y="481" width="12" height="12" fill="#f4f4f4" stroke="#3a3a3a" stroke-width="0.6"/>
<rect x="3" y="473.5" width="11" height="12" fill="#ffffff" stroke="#444" stroke-width="0.6"/>
<rect x="7" y="501.5" width="10.5" height="8.5" fill="none" stroke="#d6d6d6" stroke-width="1"/>
<circle cx="12.2" cy="505.7" r="2.6" fill="none" stroke="#d6d6d6" stroke-width="0.9"/>
<rect x="10" y="519" width="8.5" height="7" fill="none" stroke="#d6d6d6" stroke-width="1"/>
<rect x="6.5" y="522" width="8.5" height="7" fill="#535353" stroke="#d6d6d6" stroke-width="1"/>
<path d="M20,531 L22,531 L22,529 Z" fill="#9a9a9a"/>
<defs><pattern id="chk" x="303.1" y="187.6" width="10.2" height="10.67" patternUnits="userSpaceOnUse"><rect width="10.2" height="10.67" fill="#ffffff"/><rect x="5.1" y="0" width="5.1" height="5.335" fill="#cccccc"/><rect x="0" y="5.335" width="5.1" height="5.335" fill="#cccccc"/></pattern></defs>
<rect x="303.2" y="187" width="289.3" height="410.5" fill="url(#chk)"/>
<line x1="323.5" y1="73" x2="323.5" y2="187" stroke="#58a8a8" stroke-width="1.2"/>
<line x1="323.5" y1="597.5" x2="323.5" y2="711" stroke="#58a8a8" stroke-width="1.2"/>
<line x1="323.5" y1="187" x2="323.5" y2="597.5" stroke="#b8ecec" stroke-width="1.4"/>
<line x1="572.8" y1="73" x2="572.8" y2="187" stroke="#58a8a8" stroke-width="1.2"/>
<line x1="572.8" y1="597.5" x2="572.8" y2="711" stroke="#58a8a8" stroke-width="1.2"/>
<line x1="572.8" y1="187" x2="572.8" y2="597.5" stroke="#b8ecec" stroke-width="1.4"/>
<line x1="36" y1="210.5" x2="303.2" y2="210.5" stroke="#58a8a8" stroke-width="1.2"/>
<line x1="592.5" y1="210.5" x2="857" y2="210.5" stroke="#58a8a8" stroke-width="1.2"/>
<line x1="303.2" y1="210.5" x2="592.5" y2="210.5" stroke="#b8ecec" stroke-width="1.4"/>
<line x1="36" y1="574.8" x2="303.2" y2="574.8" stroke="#58a8a8" stroke-width="1.2"/>
<line x1="592.5" y1="574.8" x2="857" y2="574.8" stroke="#58a8a8" stroke-width="1.2"/>
<line x1="303.2" y1="574.8" x2="592.5" y2="574.8" stroke="#b8ecec" stroke-width="1.4"/>
<rect x="394" y="258" width="144" height="203" fill="#ffffff"/>
<rect x="538" y="258" width="3" height="203" fill="#b4b4b4"/>
<rect x="541" y="258" width="145" height="203" fill="#ffffff"/>
<circle cx="404.5" cy="268.3" r="3" fill="#1aa0c8"/>
<path d="M402.5,267 L406,269.5 M403,270 L405.5,266.5" fill="none" stroke="#ffffff" stroke-width="0.8"/>
<text x="408.5" y="271" font-size="6.6" fill="#1c2f4a" textLength="46" lengthAdjust="spacingAndGlyphs" font-weight="bold" stroke="#1c2f4a" stroke-width="0.25">J Trust Royal Bank</text>
<rect x="458" y="264" width="33" height="0.8" fill="#b0b0b0"/>
<rect x="458" y="266" width="33" height="0.8" fill="#b0b0b0"/>
<rect x="458" y="268" width="33" height="0.8" fill="#b0b0b0"/>
<rect x="458" y="270" width="33" height="0.8" fill="#b0b0b0"/>
<rect x="458" y="273" width="18" height="1.1" fill="#555"/>
<rect x="458" y="275.5" width="20" height="0.9" fill="#9a9a9a"/>
<rect x="509.5" y="272.6" width="22.5" height="1.6" fill="#333"/>
<rect x="511" y="276.5" width="20" height="0.8" fill="#999"/>
<rect x="401" y="282" width="20" height="1.0" fill="#666"/>
<rect x="401" y="285" width="33" height="1.0" fill="#666"/>
<rect x="401" y="288" width="30" height="1.0" fill="#666"/>
<rect x="401" y="291" width="25" height="1.0" fill="#666"/>
<rect x="401" y="294" width="30" height="1.5" fill="#222"/>
<rect x="476.5" y="280.5" width="55" height="15" fill="none" stroke="#444" stroke-width="0.8"/>
<rect x="479" y="283" width="18" height="1" fill="#444"/>
<rect x="514" y="282.3" width="16" height="1" fill="#555"/>
<rect x="479" y="285.7" width="18" height="1" fill="#444"/>
<rect x="518" y="285" width="12" height="1" fill="#666"/>
<rect x="479" y="289" width="18" height="1.3" fill="#222"/>
<rect x="512" y="288.8" width="18" height="1.3" fill="#333"/>
<rect x="481" y="292.3" width="46" height="0.9" fill="#9cc"/>
<rect x="400.5" y="300" width="63" height="17.5" fill="#ffffff" stroke="#333" stroke-width="0.8"/>
<rect x="400.5" y="300" width="63" height="5.3" fill="#1f9ad6"/>
<rect x="402" y="301.8" width="22" height="1.2" fill="#0b3d66"/>
<rect x="402" y="307" width="18" height="0.9" fill="#8a8a8a"/>
<rect x="402" y="309.3" width="18" height="0.9" fill="#8a8a8a"/>
<rect x="402" y="311.5" width="18" height="0.9" fill="#8a8a8a"/>
<rect x="402" y="313.8" width="18" height="0.9" fill="#8a8a8a"/>
<rect x="446" y="307" width="15" height="0.9" fill="#9a9a9a"/>
<rect x="452" y="309.3" width="9" height="0.9" fill="#9a9a9a"/>
<rect x="457" y="311.5" width="4" height="0.9" fill="#9a9a9a"/>
<rect x="472.5" y="300" width="59.5" height="21" fill="#ffffff" stroke="#333" stroke-width="0.8"/>
<rect x="472.5" y="300" width="59.5" height="5.5" fill="#1f9ad6"/>
<rect x="474" y="301.8" width="30" height="1.2" fill="#0b3d66"/>
<rect x="474" y="306.5" width="8" height="0.9" fill="#8a8a8a"/>
<rect x="517" y="306.5" width="13" height="0.9" fill="#9a9a9a"/>
<rect x="474" y="309" width="10" height="0.9" fill="#8a8a8a"/>
<rect x="517" y="309" width="13" height="0.9" fill="#9a9a9a"/>
<rect x="474" y="311.3" width="32" height="0.9" fill="#8a8a8a"/>
<rect x="517" y="311.3" width="13" height="0.9" fill="#9a9a9a"/>
<rect x="474" y="313.5" width="28" height="0.9" fill="#8a8a8a"/>
<rect x="517" y="313.5" width="13" height="0.9" fill="#9a9a9a"/>
<rect x="474" y="316" width="26" height="0.9" fill="#8a8a8a"/>
<rect x="517" y="316" width="13" height="0.9" fill="#9a9a9a"/>
<rect x="474" y="318.3" width="22" height="0.9" fill="#8a8a8a"/>
<rect x="517" y="318.3" width="13" height="0.9" fill="#9a9a9a"/>
<rect x="400.5" y="322" width="131.5" height="12.5" fill="#ffffff" stroke="#333" stroke-width="0.8"/>
<rect x="400.5" y="322" width="131.5" height="4.3" fill="#1f9ad6"/>
<rect x="402" y="323.3" width="50" height="1.1" fill="#0b3d66"/>
<line x1="400.5" y1="329.6" x2="532" y2="329.6" stroke="#333" stroke-width="0.6"/>
<rect x="402" y="327.5" width="4" height="0.8" fill="#888"/>
<rect x="410" y="327.5" width="8" height="0.8" fill="#888"/>
<rect x="506" y="327.5" width="6" height="0.8" fill="#888"/>
<rect x="522" y="327.5" width="8" height="0.8" fill="#888"/>
<rect x="402" y="331" width="5" height="0.8" fill="#a88"/>
<rect x="411" y="331" width="11" height="0.8" fill="#a88"/>
<rect x="411" y="333" width="11" height="0.8" fill="#a88"/>
<rect x="507" y="331" width="3" height="0.8" fill="#a88"/>
<rect x="525" y="331" width="3" height="0.8" fill="#a88"/>
<rect x="507" y="333" width="3" height="0.8" fill="#aaa"/>
<rect x="527" y="333" width="4" height="0.8" fill="#9c9"/>
<rect x="401" y="338" width="64.5" height="29.5" fill="#ffffff" stroke="#333" stroke-width="0.8"/>
<rect x="401" y="338" width="64.5" height="3.7" fill="#1f9ad6"/>
<rect x="402.5" y="339.3" width="26" height="1.1" fill="#0b3d66"/>
<line x1="433.5" y1="341.7" x2="433.5" y2="367.5" stroke="#444" stroke-width="0.6"/>
<line x1="449" y1="341.7" x2="449" y2="367.5" stroke="#444" stroke-width="0.6"/>
<line x1="401" y1="346.5" x2="465.5" y2="346.5" stroke="#555" stroke-width="0.5"/>
<line x1="401" y1="350" x2="465.5" y2="350" stroke="#555" stroke-width="0.5"/>
<line x1="401" y1="353.7" x2="465.5" y2="353.7" stroke="#555" stroke-width="0.5"/>
<line x1="401" y1="357.3" x2="465.5" y2="357.3" stroke="#555" stroke-width="0.5"/>
<line x1="401" y1="361" x2="465.5" y2="361" stroke="#555" stroke-width="0.5"/>
<line x1="401" y1="364.5" x2="465.5" y2="364.5" stroke="#555" stroke-width="0.5"/>
<rect x="439" y="343" width="3" height="0.8" fill="#777"/>
<rect x="437" y="345" width="8" height="0.8" fill="#777"/>
<rect x="455" y="343" width="3" height="0.8" fill="#777"/>
<rect x="452" y="345" width="9" height="0.8" fill="#777"/>
<rect x="402.5" y="348" width="9" height="0.9" fill="#777"/>
<rect x="437" y="348" width="11" height="0.9" fill="#aaa"/>
<rect x="452" y="348" width="12" height="0.9" fill="#aaa"/>
<rect x="402.5" y="351.7" width="10" height="0.9" fill="#777"/>
<rect x="437" y="351.7" width="11" height="0.9" fill="#aaa"/>
<rect x="452" y="351.7" width="12" height="0.9" fill="#aaa"/>
<rect x="402.5" y="355.3" width="28" height="0.9" fill="#777"/>
<rect x="437" y="355.3" width="11" height="0.9" fill="#aaa"/>
<rect x="452" y="355.3" width="12" height="0.9" fill="#aaa"/>
<rect x="402.5" y="359" width="6" height="0.9" fill="#777"/>
<rect x="437" y="359" width="11" height="0.9" fill="#aaa"/>
<rect x="452" y="359" width="12" height="0.9" fill="#aaa"/>
<rect x="402.5" y="362.7" width="24" height="0.9" fill="#777"/>
<rect x="437" y="362.7" width="11" height="0.9" fill="#aaa"/>
<rect x="452" y="362.7" width="12" height="0.9" fill="#aaa"/>
<rect x="402.5" y="366" width="6" height="0.9" fill="#777"/>
<rect x="437" y="366" width="11" height="0.9" fill="#aaa"/>
<rect x="452" y="366" width="12" height="0.9" fill="#aaa"/>
<rect x="436" y="348" width="12" height="0.6" fill="#cfa"/>
<rect x="401" y="369" width="64.8" height="15.7" fill="#ffffff" stroke="#333" stroke-width="0.8"/>
<rect x="401" y="369" width="64.8" height="3.7" fill="#1f9ad6"/>
<rect x="402.5" y="370" width="22" height="1.1" fill="#0b3d66"/>
<rect x="402.5" y="374.5" width="14" height="1.3" fill="#333"/>
<rect x="418" y="374.5" width="46" height="0.9" fill="#999"/>
<rect x="402.5" y="377" width="60" height="0.9" fill="#999"/>
<rect x="402.5" y="379.5" width="60" height="0.9" fill="#999"/>
<rect x="402.5" y="382" width="42" height="0.9" fill="#999"/>
<rect x="401" y="388" width="129" height="0.9" fill="#999"/>
<rect x="401" y="390.5" width="129" height="0.9" fill="#999"/>
<rect x="401" y="393" width="28" height="0.9" fill="#999"/>
<rect x="401" y="397.5" width="129" height="0.9" fill="#999"/>
<rect x="401" y="400" width="40" height="0.9" fill="#999"/>
<rect x="401" y="403.5" width="129" height="0.9" fill="#999"/>
<rect x="401" y="406" width="129" height="0.9" fill="#999"/>
<rect x="401" y="411.5" width="35" height="1.0" fill="#777"/>
<rect x="447" y="409.5" width="4" height="4" fill="#777"/>
<rect x="453" y="411.5" width="10" height="0.9" fill="#888"/>
<line x1="400" y1="415.5" x2="534" y2="415.5" stroke="#333" stroke-width="0.8"/>
<line x1="437.5" y1="416" x2="437.5" y2="452.5" stroke="#333" stroke-width="0.8"/>
<rect x="401" y="431" width="27" height="0.9" fill="#888"/>
<rect x="401" y="433.3" width="28" height="0.9" fill="#888"/>
<rect x="401" y="435.6" width="13" height="0.9" fill="#888"/>
<rect x="440" y="418" width="20" height="0.9" fill="#888"/>
<rect x="440" y="420.3" width="33" height="0.9" fill="#888"/>
<rect x="440" y="422.6" width="28" height="0.9" fill="#888"/>
<rect x="440" y="424.9" width="20" height="0.9" fill="#888"/>
<rect x="440" y="430.5" width="16" height="0.9" fill="#888"/>
<rect x="440" y="432.8" width="20" height="0.9" fill="#888"/>
<rect x="440" y="435.1" width="30" height="0.9" fill="#888"/>
<rect x="440" y="437.4" width="28" height="0.9" fill="#888"/>
<rect x="440" y="439.7" width="18" height="0.9" fill="#888"/>
<rect x="440" y="443.5" width="32" height="1.3" fill="#333"/>
<rect x="440" y="448.5" width="52" height="1.3" fill="#333"/>
<rect x="503" y="417" width="28" height="0.8" fill="#6aa6cc"/>
<rect x="490" y="419.2" width="42" height="19" fill="#ffffff" stroke="#1f9ad6" stroke-width="0.8"/>
<rect x="490" y="419.2" width="42" height="4.8" fill="#1f9ad6"/>
<rect x="490" y="424.5" width="42" height="2.5" fill="#ffffff"/>
<rect x="491" y="424.8" width="38" height="1.0" fill="#444"/>
<line x1="490" y1="427.5" x2="532" y2="427.5" stroke="#444" stroke-width="0.5"/>
<rect x="491" y="430" width="14" height="0.8" fill="#888"/>
<rect x="515" y="430" width="15" height="0.8" fill="#888"/>
<rect x="491" y="432.5" width="12" height="0.8" fill="#888"/>
<rect x="515" y="432.5" width="6" height="0.8" fill="#888"/>
<rect x="490" y="434.5" width="42" height="3.8" fill="#1f9ad6"/>
<rect x="492" y="440.5" width="4" height="3.5" fill="#ffffff" stroke="#333" stroke-width="0.6"/>
<rect x="498" y="441" width="32" height="0.8" fill="#888"/>
<rect x="498" y="443" width="32" height="0.8" fill="#888"/>
<rect x="547" y="266" width="50" height="1.0" fill="#9a9a9a"/>
<rect x="618" y="266" width="46" height="1.0" fill="#9a9a9a"/>
<rect x="547" y="270" width="60" height="0.9" fill="#b4b4b4"/>
<rect x="547" y="272.5" width="60" height="0.9" fill="#b4b4b4"/>
<rect x="547" y="275" width="60" height="0.9" fill="#b4b4b4"/>
<rect x="547" y="278.5" width="40" height="0.9" fill="#b4b4b4"/>
<rect x="547" y="286" width="60" height="0.9" fill="#b4b4b4"/>
<rect x="547" y="288.5" width="60" height="0.9" fill="#b4b4b4"/>
<rect x="547" y="291.5" width="60" height="0.9" fill="#b4b4b4"/>
<rect x="547" y="294.5" width="14" height="0.9" fill="#b4b4b4"/>
<rect x="618" y="270" width="61" height="0.9" fill="#b4b4b4"/>
<rect x="618" y="272.5" width="61" height="0.9" fill="#b4b4b4"/>
<rect x="618" y="275.5" width="61" height="0.9" fill="#b4b4b4"/>
<rect x="618" y="278.5" width="40" height="0.9" fill="#b4b4b4"/>
<rect x="618" y="284" width="61" height="0.9" fill="#b4b4b4"/>
<rect x="618" y="287" width="61" height="0.9" fill="#b4b4b4"/>
<rect x="618" y="290" width="46" height="0.9" fill="#b4b4b4"/>
<rect x="591" y="298.5" width="37" height="0.9" fill="#999"/>
<rect x="547" y="303.5" width="20" height="0.9" fill="#b4b4b4"/>
<rect x="547" y="306.5" width="18" height="0.9" fill="#b4b4b4"/>
<rect x="547" y="310.5" width="12" height="0.9" fill="#b4b4b4"/>
<rect x="547" y="315" width="33" height="0.9" fill="#b4b4b4"/>
<rect x="547" y="319" width="61" height="0.9" fill="#b4b4b4"/>
<rect x="547" y="322.5" width="61" height="0.9" fill="#b4b4b4"/>
<rect x="547" y="325" width="50" height="0.9" fill="#b4b4b4"/>
<rect x="547" y="329.5" width="55" height="0.9" fill="#b4b4b4"/>
<rect x="547" y="332.5" width="28" height="0.9" fill="#b4b4b4"/>
<rect x="547" y="336" width="22" height="1.1" fill="#444"/>
<rect x="618" y="303.5" width="61" height="0.9" fill="#b4b4b4"/>
<rect x="618" y="306.5" width="61" height="0.9" fill="#b4b4b4"/>
<rect x="618" y="309.5" width="12" height="0.9" fill="#b4b4b4"/>
<rect x="618" y="315" width="61" height="0.9" fill="#b4b4b4"/>
<rect x="618" y="318" width="61" height="0.9" fill="#b4b4b4"/>
<rect x="618" y="321" width="61" height="0.9" fill="#b4b4b4"/>
<rect x="618" y="324" width="61" height="0.9" fill="#b4b4b4"/>
<rect x="618" y="326.5" width="28" height="0.9" fill="#b4b4b4"/>
<rect x="618" y="329.5" width="61" height="0.9" fill="#b4b4b4"/>
<rect x="618" y="332" width="38" height="0.9" fill="#b4b4b4"/>
<rect x="618" y="335" width="20" height="0.9" fill="#b4b4b4"/>
<rect x="618" y="338.5" width="28" height="0.9" fill="#b4b4b4"/>
<rect x="600" y="347" width="24" height="1.1" fill="#666"/>
<rect x="546" y="351.5" width="134" height="0.85" fill="#b8b8b8"/>
<rect x="546" y="354" width="134" height="0.85" fill="#b8b8b8"/>
<rect x="546" y="356.5" width="10" height="0.85" fill="#b8b8b8"/>
<rect x="546" y="361.5" width="86" height="0.85" fill="#b8b8b8"/>
<rect x="546" y="365.5" width="134" height="0.85" fill="#b8b8b8"/>
<rect x="546" y="368" width="134" height="0.85" fill="#b8b8b8"/>
<rect x="546" y="370.5" width="134" height="0.85" fill="#b8b8b8"/>
<rect x="546" y="373.5" width="57" height="0.85" fill="#b8b8b8"/>
<rect x="546" y="378" width="134" height="0.85" fill="#b8b8b8"/>
<rect x="546" y="381" width="134" height="0.85" fill="#b8b8b8"/>
<rect x="546" y="383.5" width="134" height="0.85" fill="#b8b8b8"/>
<rect x="546" y="386.5" width="134" height="0.85" fill="#b8b8b8"/>
<rect x="546" y="391" width="27" height="0.85" fill="#b8b8b8"/>
<rect x="546" y="397" width="134" height="0.85" fill="#b8b8b8"/>
<rect x="546" y="402" width="134" height="0.85" fill="#b8b8b8"/>
<rect x="546" y="405" width="134" height="0.85" fill="#b8b8b8"/>
<rect x="546" y="409.5" width="134" height="0.85" fill="#b8b8b8"/>
<rect x="546" y="412.5" width="36" height="0.85" fill="#b8b8b8"/>
<rect x="546" y="416" width="134" height="0.85" fill="#b8b8b8"/>
<rect x="546" y="419" width="14" height="0.85" fill="#b8b8b8"/>
<rect x="546" y="427.5" width="40" height="0.85" fill="#b0b0b0"/>
<rect x="546" y="430.5" width="54" height="0.85" fill="#b0b0b0"/>
<rect x="546" y="433.5" width="50" height="0.85" fill="#b0b0b0"/>
<rect x="546" y="436.5" width="50" height="0.85" fill="#b0b0b0"/>
<rect x="546" y="439.5" width="54" height="0.85" fill="#b0b0b0"/>
<rect x="546" y="442.5" width="54" height="0.85" fill="#b0b0b0"/>
<rect x="546" y="445.5" width="52" height="0.85" fill="#b0b0b0"/>
<rect x="546" y="449.5" width="30" height="0.85" fill="#b0b0b0"/>
<rect x="652" y="428" width="23" height="0.8" fill="#aaa"/>
<rect x="633.5" y="431" width="45.5" height="7.5" fill="none" stroke="#777" stroke-width="0.6"/>
<rect x="635" y="432.5" width="12" height="0.8" fill="#666"/>
<rect x="650" y="432.5" width="26" height="0.8" fill="#999"/>
<rect x="652" y="435" width="24" height="0.8" fill="#bbb"/>
<rect x="634" y="442" width="12" height="0.7" fill="#aaa"/>
<rect x="648" y="442.8" width="31" height="0.5" fill="#888"/>
<rect x="634" y="445" width="12" height="0.7" fill="#aaa"/>
<rect x="648" y="445.8" width="31" height="0.5" fill="#888"/>
<rect x="634" y="449" width="12" height="0.7" fill="#aaa"/>
<rect x="648" y="449.8" width="31" height="0.5" fill="#888"/>
<rect x="634" y="452" width="12" height="0.7" fill="#aaa"/>
<rect x="648" y="452.8" width="31" height="0.5" fill="#888"/>
<rect x="857" y="60" width="13" height="660" fill="#4b4b4b"/>
<rect x="857" y="60" width="1.8" height="652" fill="#2e2e2e"/>
<rect x="870" y="40" width="210" height="9" fill="#474747"/>
<text x="886" y="47.5" font-size="7" fill="#c8c8c8" stroke="#c8c8c8" stroke-width="0.25">«</text>
<text x="1066" y="47.5" font-size="7" fill="#c8c8c8" stroke="#c8c8c8" stroke-width="0.25">»</text>
<rect x="869" y="49" width="27" height="671" fill="#545454"/>
<rect x="869.2" y="49" width="1.7" height="671" fill="#3f3f3f"/>
<line x1="895.5" y1="49" x2="895.5" y2="720" stroke="#3e3e3e" stroke-width="1"/>
<line x1="871" y1="97.5" x2="895" y2="97.5" stroke="#434343" stroke-width="1"/>
<line x1="871" y1="145.5" x2="895" y2="145.5" stroke="#434343" stroke-width="1"/>
<line x1="871" y1="173.5" x2="895" y2="173.5" stroke="#434343" stroke-width="1"/>
<line x1="871" y1="203.5" x2="895" y2="203.5" stroke="#434343" stroke-width="1"/>
<path d="M877,59 L881,59 M877,61.5 L880,61.5 M877,64 L880,64" fill="none" stroke="#d8d8d8" stroke-width="0.9"/>
<path d="M880,70 C881,67 882,66 884,66 L889,60 L890,61 L885,67 C885,69 883,70 880,70 Z" fill="#d8d8d8"/>
<circle cx="879.5" cy="78.5" r="2" fill="#d8d8d8"/>
<line x1="881" y1="78.5" x2="889" y2="78.5" stroke="#d8d8d8" stroke-width="1"/>
<path d="M887,82 L887,87 L884,84.5 Z" fill="#d8d8d8"/>
<line x1="877" y1="84.5" x2="885" y2="84.5" stroke="#d8d8d8" stroke-width="1"/>
<text x="876.5" y="118" font-size="11" fill="#d8d8d8" textLength="8" lengthAdjust="spacingAndGlyphs">A</text>
<line x1="886.5" y1="108" x2="886.5" y2="118" stroke="#d8d8d8" stroke-width="0.9"/>
<text x="877.5" y="138" font-size="11" fill="#d8d8d8" font-weight="bold">¶</text>
<text x="876" y="167" font-size="11" fill="#d8d8d8" font-family="Liberation Serif" font-style="italic">A</text>
<path d="M883,184 L888,187 L888,192 L883,195 L878,192 L878,187 Z" fill="none" stroke="#d8d8d8" stroke-width="1.1"/>
<path d="M878,187 L883,190 L888,187 M883,190 L883,195" fill="none" stroke="#d8d8d8" stroke-width="0.7"/>
<rect x="896" y="49" width="180" height="336" fill="#535353"/>
<rect x="896" y="49" width="180" height="19.5" fill="#434343"/>
<rect x="1009.5" y="49" width="39.5" height="19.5" fill="#535353"/>
<text x="901.5" y="60.3" font-size="8" fill="#a8a8a8" textLength="16.5" lengthAdjust="spacingAndGlyphs" stroke="#a8a8a8" stroke-width="0.25">Swatc</text>
<text x="924" y="60.3" font-size="8" fill="#a8a8a8" textLength="17" lengthAdjust="spacingAndGlyphs" stroke="#a8a8a8" stroke-width="0.25">Gradi</text>
<text x="947" y="60.3" font-size="8" fill="#a8a8a8" textLength="17" lengthAdjust="spacingAndGlyphs" stroke="#a8a8a8" stroke-width="0.25">Patter</text>
<text x="969" y="60.3" font-size="8" fill="#a8a8a8" textLength="17.5" lengthAdjust="spacingAndGlyphs" stroke="#a8a8a8" stroke-width="0.25">Histor</text>
<text x="992" y="60.3" font-size="8" fill="#a8a8a8" textLength="17" lengthAdjust="spacingAndGlyphs" stroke="#a8a8a8" stroke-width="0.25">Actio</text>
<text x="1014" y="60.3" font-size="8" fill="#f0f0f0" textLength="31" lengthAdjust="spacingAndGlyphs" font-weight="bold" stroke="#f0f0f0" stroke-width="0.25">Properties</text>
<line x1="1066" y1="57.5" x2="1072" y2="57.5" stroke="#bcbcbc" stroke-width="1.2"/>
<line x1="1066" y1="60" x2="1072" y2="60" stroke="#bcbcbc" stroke-width="1.2"/>
<line x1="1066" y1="62.5" x2="1072" y2="62.5" stroke="#bcbcbc" stroke-width="1.2"/>
<rect x="1075.5" y="49" width="4.5" height="671" fill="#575757"/>
<rect x="1075.5" y="49" width="1.8" height="671" fill="#414141"/>
<rect x="903" y="73" width="13.5" height="15" fill="#3a3a3a"/>
<path d="M906.5,76 L911,76 L913.5,78.5 L913.5,85 L906.5,85 Z" fill="none" stroke="#e0e0e0" stroke-width="0.9"/>
<path d="M911,76 L911,78.5 L913.5,78.5" fill="none" stroke="#e0e0e0" stroke-width="0.8"/>
<text x="920" y="83.8" font-size="8" fill="#d8d8d8" textLength="29" lengthAdjust="spacingAndGlyphs" stroke="#d8d8d8" stroke-width="0.25">Document</text>
<line x1="896" y1="92.5" x2="1066" y2="92.5" stroke="#474747" stroke-width="1"/>
<rect x="1066" y="93" width="8" height="275" fill="#4a4a4a"/>
<path d="M1068,99 L1070,97 L1072,99" fill="none" stroke="#777" stroke-width="0.8"/>
<rect x="1067" y="102" width="6" height="224" fill="#5f5f5f"/>
<path d="M1068,362 L1070,364 L1072,362" fill="none" stroke="#6a6a6a" stroke-width="0.8"/>
<path d="M900,101 L902.5,103.5 L905,101" fill="none" stroke="#a0a0a0" stroke-width="1"/>
<text x="909.5" y="104.8" font-size="8" fill="#ececec" textLength="23" lengthAdjust="spacingAndGlyphs" font-weight="bold" stroke="#ececec" stroke-width="0.25">Canvas</text>
<text x="928.5" y="121.8" font-size="7.5" fill="#c8c8c8" textLength="6" lengthAdjust="spacingAndGlyphs" stroke="#c8c8c8" stroke-width="0.25">W</text>
<rect x="938.5" y="115" width="31" height="9.5" fill="#434343"/>
<text x="940.5" y="121.3" font-size="7.5" fill="#e0e0e0" textLength="23" lengthAdjust="spacingAndGlyphs" stroke="#e0e0e0" stroke-width="0.25">2232 px</text>
<text x="979.5" y="121.8" font-size="7.5" fill="#c8c8c8" textLength="5" lengthAdjust="spacingAndGlyphs" stroke="#c8c8c8" stroke-width="0.25">X</text>
<rect x="989" y="115" width="31" height="9.5" fill="#4e4e4e"/>
<text x="991" y="121.3" font-size="7.5" fill="#6a6a6a" textLength="12" lengthAdjust="spacingAndGlyphs" stroke="#6a6a6a" stroke-width="0.25">0 px</text>
<text x="929" y="138.8" font-size="7.5" fill="#c8c8c8" textLength="5.5" lengthAdjust="spacingAndGlyphs" stroke="#c8c8c8" stroke-width="0.25">H</text>
<rect x="938.5" y="132.5" width="31" height="9.5" fill="#434343"/>
<text x="940.5" y="138.8" font-size="7.5" fill="#e0e0e0" textLength="23" lengthAdjust="spacingAndGlyphs" stroke="#e0e0e0" stroke-width="0.25">2854 px</text>
<text x="980" y="138.8" font-size="7.5" fill="#c8c8c8" textLength="5" lengthAdjust="spacingAndGlyphs" stroke="#c8c8c8" stroke-width="0.25">Y</text>
<rect x="989" y="132.5" width="31" height="9.5" fill="#4e4e4e"/>
<text x="991" y="138.8" font-size="7.5" fill="#6a6a6a" textLength="12" lengthAdjust="spacingAndGlyphs" stroke="#6a6a6a" stroke-width="0.25">0 px</text>
<rect x="908" y="123" width="5" height="5" rx="2.5" fill="none" stroke="#c0c0c0" stroke-width="1.1"/>
<rect x="908" y="128" width="5" height="5" rx="2.5" fill="none" stroke="#c0c0c0" stroke-width="1.1"/>
<rect x="939" y="151" width="13.5" height="15.5" fill="#3a3a3a"/>
<rect x="941.5" y="153.5" width="8.5" height="10.5" fill="none" stroke="#d0d0d0" stroke-width="0.9"/>
<circle cx="945.7" cy="156.5" r="1.3" fill="#d0d0d0"/>
<rect x="944" y="158.5" width="3.5" height="4.5" fill="#d0d0d0"/>
<rect x="956.5" y="154.5" width="11.5" height="9.5" fill="none" stroke="#c8c8c8" stroke-width="0.9"/>
<circle cx="962.2" cy="157.5" r="1.3" fill="#c8c8c8"/>
<rect x="960.2" y="159.2" width="4" height="3.5" fill="#c8c8c8"/>
<text x="938.5" y="181.8" font-size="7.5" fill="#d0d0d0" textLength="74.5" lengthAdjust="spacingAndGlyphs" stroke="#d0d0d0" stroke-width="0.25">Resolution: 250 pixels/inch</text>
<text x="918" y="199.3" font-size="7.5" fill="#c8c8c8" textLength="16" lengthAdjust="spacingAndGlyphs" stroke="#c8c8c8" stroke-width="0.25">Mode</text>
<rect x="939" y="193" width="81.5" height="12" fill="#434343"/>
<text x="943" y="200.8" font-size="7.5" fill="#d8d8d8" textLength="26" lengthAdjust="spacingAndGlyphs" stroke="#d8d8d8" stroke-width="0.25">RGB Color</text>
<path d="M1013.5,198.0 L1015.5,200.0 L1017.5,198.0" fill="none" stroke="#a0a0a0" stroke-width="0.9"/>
<rect x="939" y="210" width="81.5" height="12.5" fill="#434343"/>
<text x="943" y="218.3" font-size="7.5" fill="#d8d8d8" textLength="43" lengthAdjust="spacingAndGlyphs" stroke="#d8d8d8" stroke-width="0.25">16 Bits/Channel</text>
<path d="M1013.5,215.25 L1015.5,217.25 L1017.5,215.25" fill="none" stroke="#a0a0a0" stroke-width="0.9"/>
<text x="926.5" y="235.8" font-size="7.5" fill="#b8b8b8" textLength="9" lengthAdjust="spacingAndGlyphs" stroke="#b8b8b8" stroke-width="0.25">Fill</text>
<rect x="939.5" y="228.5" width="10" height="11.5" fill="#4e4e4e" stroke="#444" stroke-width="0.6"/>
<rect x="953" y="228.5" width="67" height="12" fill="#434343"/>
<text x="957" y="236.3" font-size="7.5" fill="#d8d8d8" textLength="33" lengthAdjust="spacingAndGlyphs" stroke="#d8d8d8" stroke-width="0.25">Transparent</text>
<path d="M1013,233.5 L1015,235.5 L1017,233.5" fill="none" stroke="#a0a0a0" stroke-width="0.9"/>
<line x1="896" y1="246.5" x2="1066" y2="246.5" stroke="#474747" stroke-width="1"/>
<path d="M900,255.5 L902.5,258.0 L905,255.5" fill="none" stroke="#a0a0a0" stroke-width="1"/>
<text x="910" y="259.8" font-size="8" fill="#ececec" textLength="44" lengthAdjust="spacingAndGlyphs" font-weight="bold" stroke="#ececec" stroke-width="0.25">Rulers &amp; Grids</text>
<rect x="903" y="271" width="15" height="16" fill="#3a3a3a"/>
<path d="M906.5,284 L906.5,274.5 L915,274.5" fill="none" stroke="#e8e8e8" stroke-width="2"/>
<rect x="925" y="273" width="12" height="12" fill="none" stroke="#c8c8c8" stroke-width="0.8"/>
<line x1="929" y1="273" x2="929" y2="285" stroke="#c8c8c8" stroke-width="0.6"/>
<line x1="925" y1="277" x2="937" y2="277" stroke="#c8c8c8" stroke-width="0.6"/>
<line x1="933" y1="273" x2="933" y2="285" stroke="#c8c8c8" stroke-width="0.6"/>
<line x1="925" y1="281" x2="937" y2="281" stroke="#c8c8c8" stroke-width="0.6"/>
<rect x="946" y="273" width="12" height="12" fill="none" stroke="#c8c8c8" stroke-width="0.8" stroke-dasharray="1,1"/>
<circle cx="952" cy="279" r="3" fill="none" stroke="#9a9a9a" stroke-width="0.7" stroke-dasharray="1,1"/>
<rect x="975" y="272" width="45" height="14" fill="#434343"/>
<text x="979" y="281.8" font-size="7.5" fill="#d8d8d8" textLength="17" lengthAdjust="spacingAndGlyphs" stroke="#d8d8d8" stroke-width="0.25">Pixels</text>
<path d="M1013,278.0 L1015,280.0 L1017,278.0" fill="none" stroke="#a0a0a0" stroke-width="0.9"/>
<line x1="896" y1="294.5" x2="1066" y2="294.5" stroke="#474747" stroke-width="1"/>
<path d="M900,302.5 L902.5,305.0 L905,302.5" fill="none" stroke="#a0a0a0" stroke-width="1"/>
<text x="910" y="307.3" font-size="8" fill="#ececec" textLength="21" lengthAdjust="spacingAndGlyphs" font-weight="bold" stroke="#ececec" stroke-width="0.25">Guides</text>
<rect x="903" y="318" width="15" height="16" fill="#3a3a3a"/>
<path d="M907,321 L907,331 M910.5,321 L910.5,331 M906,324.5 L915,324.5 M906,328 L915,328" fill="none" stroke="#e0e0e0" stroke-width="0.9"/>
<path d="M928,320 L928,332 M931,320 L931,332 M925,324.5 L936,324.5 M925,328 L934,328" fill="none" stroke="#c8c8c8" stroke-width="0.8"/>
<rect x="932" y="329" width="4" height="4" fill="#c8c8c8"/>
<rect x="945" y="317" width="15" height="17" fill="#3a3a3a"/>
<path d="M948,320 L948,332 M948,326 L953,322 M948,326 L953,330" fill="none" stroke="#d0d0d0" stroke-width="0.9"/>
<path d="M955,322 L955,332 M953,328 L958,328" fill="none" stroke="#d0d0d0" stroke-width="0.8"/>
<rect x="954" y="329" width="4" height="3.5" fill="#d0d0d0"/>
<rect x="975" y="318.5" width="45" height="14" fill="#434343"/>
<line x1="980" y1="325.5" x2="1008" y2="325.5" stroke="#d8d8d8" stroke-width="1.3"/>
<path d="M1013,324.5 L1015,326.5 L1017,324.5" fill="none" stroke="#a0a0a0" stroke-width="0.9"/>
<line x1="896" y1="341.5" x2="1066" y2="341.5" stroke="#474747" stroke-width="1"/>
<path d="M900,350 L902.5,352.5 L905,350" fill="none" stroke="#a0a0a0" stroke-width="1"/>
<text x="910" y="354.3" font-size="8" fill="#ececec" textLength="43" lengthAdjust="spacingAndGlyphs" font-weight="bold" stroke="#ececec" stroke-width="0.25">Quick Actions</text>
<line x1="896" y1="385.5" x2="1080" y2="385.5" stroke="#3a3a3a" stroke-width="1.5"/>
<rect x="896" y="386.5" width="180" height="20.5" fill="#434343"/>
<rect x="896.5" y="386.5" width="29.5" height="20.5" fill="#535353"/>
<text x="902" y="398.8" font-size="8" fill="#ececec" textLength="18.5" lengthAdjust="spacingAndGlyphs" font-weight="bold" stroke="#ececec" stroke-width="0.25">Layers</text>
<line x1="1066" y1="394.5" x2="1072" y2="394.5" stroke="#bcbcbc" stroke-width="1.2"/>
<line x1="1066" y1="397" x2="1072" y2="397" stroke="#bcbcbc" stroke-width="1.2"/>
<line x1="1066" y1="399.5" x2="1072" y2="399.5" stroke="#bcbcbc" stroke-width="1.2"/>
<rect x="900" y="413" width="52" height="13" fill="#3e3e3e"/>
<circle cx="906.5" cy="418.5" r="2.3" fill="none" stroke="#e0e0e0" stroke-width="1.1"/>
<line x1="908" y1="420" x2="910.5" y2="422.5" stroke="#e0e0e0" stroke-width="1.3"/>
<text x="912.5" y="421.3" font-size="7.5" fill="#e0e0e0" textLength="12" lengthAdjust="spacingAndGlyphs" stroke="#e0e0e0" stroke-width="0.25">Kind</text>
<path d="M946,418.5 L948.5,421 L951,418.5" fill="none" stroke="#a8a8a8" stroke-width="0.9"/>
<rect x="959" y="414.5" width="8.5" height="8" fill="none" stroke="#d4d4d4" stroke-width="0.9"/>
<path d="M960,421.5 L962.5,418 L964.5,420 L966.5,418.5 L966.5,421.5 Z" fill="#d4d4d4"/>
<circle cx="977.5" cy="418.5" r="3.8" fill="none" stroke="#d4d4d4" stroke-width="1"/>
<path d="M980,416 A3.8,3.8 0 0 1 975,421 Z" fill="#d4d4d4"/>
<text x="989" y="421.8" font-size="10.5" fill="#d4d4d4" textLength="9" lengthAdjust="spacingAndGlyphs" font-family="Liberation Serif">T</text>
<rect x="1005.5" y="414.5" width="8" height="8" fill="none" stroke="#d4d4d4" stroke-width="0.9"/>
<rect x="1004.5" y="413.5" width="2" height="2" fill="#d4d4d4"/>
<rect x="1012.5" y="413.5" width="2" height="2" fill="#d4d4d4"/>
<rect x="1004.5" y="421.5" width="2" height="2" fill="#d4d4d4"/>
<rect x="1012.5" y="421.5" width="2" height="2" fill="#d4d4d4"/>
<path d="M1021,415 L1025,415 L1027.5,417.5 L1027.5,424 L1021,424 Z" fill="none" stroke="#d4d4d4" stroke-width="0.9"/>
<rect x="1021" y="420" width="3.5" height="4" fill="#d4d4d4"/>
<circle cx="1038" cy="416.5" r="2.6" fill="#f0f0f0"/>
<line x1="1038" y1="419" x2="1038" y2="425" stroke="#3a3a3a" stroke-width="1.5"/>
<line x1="896" y1="429.5" x2="1066" y2="429.5" stroke="#474747" stroke-width="1"/>
<rect x="900" y="434" width="78" height="12" fill="#4d4d4d"/>
<text x="903" y="441.8" font-size="7.5" fill="#707070" textLength="19" lengthAdjust="spacingAndGlyphs" stroke="#707070" stroke-width="0.25">Normal</text>
<path d="M971,439 L973,441 L975,439" fill="none" stroke="#6a6a6a" stroke-width="0.8"/>
<text x="983" y="441.8" font-size="7.5" fill="#6e6e6e" textLength="22" lengthAdjust="spacingAndGlyphs" stroke="#6e6e6e" stroke-width="0.25">Opacity:</text>
<rect x="1009" y="434" width="21" height="12" fill="#464646"/>
<text x="1011" y="441.8" font-size="7" fill="#666" textLength="14" lengthAdjust="spacingAndGlyphs" stroke="#666" stroke-width="0.25">100%</text>
<rect x="1030" y="434" width="6" height="12" fill="#4d4d4d"/>
<line x1="896" y1="447.5" x2="1066" y2="447.5" stroke="#474747" stroke-width="1"/>
<text x="900" y="460.8" font-size="7.5" fill="#6e6e6e" textLength="14" lengthAdjust="spacingAndGlyphs" stroke="#6e6e6e" stroke-width="0.25">Lock:</text>
<rect x="920.5" y="454.5" width="8" height="8" fill="none" stroke="#8a8a8a" stroke-width="0.8" stroke-dasharray="1.2,1"/>
<rect x="922.5" y="456.5" width="4" height="4" fill="#8a8a8a"/>
<path d="M933,463 L935,460 L941,453.5 L942,454.5 L936,461 Z" fill="#8a8a8a"/>
<path d="M947.8,458.5 L954.2,458.5 M951,455.3 L951,461.7" fill="none" stroke="#8a8a8a" stroke-width="0.8"/>
<path d="M946.84,458.5 L948.6,457.06 L948.6,459.94 Z M955.16,458.5 L953.4,457.06 L953.4,459.94 Z M951,454.34 L949.56,456.09999999999997 L952.44,456.09999999999997 Z M951,462.66 L949.56,460.90000000000003 L952.44,460.90000000000003 Z" fill="#8a8a8a"/>
<path d="M961,456 L961,462 L969,462 L969,457 M963,456 L967,456" fill="none" stroke="#8a8a8a" stroke-width="0.9"/>
<rect x="975.5" y="457.5" width="7" height="6" fill="#8a8a8a"/>
<path d="M976.5,457.5 L976.5,455.5 A2.5,2.5 0 0 1 981.5,455.5 L981.5,457.5" fill="none" stroke="#8a8a8a" stroke-width="1"/>
<text x="996" y="460.8" font-size="7.5" fill="#6e6e6e" textLength="10" lengthAdjust="spacingAndGlyphs" stroke="#6e6e6e" stroke-width="0.25">Fill:</text>
<rect x="1009" y="452.5" width="21" height="12" fill="#464646"/>
<text x="1011" y="460.3" font-size="7" fill="#666" textLength="14" lengthAdjust="spacingAndGlyphs" stroke="#666" stroke-width="0.25">100%</text>
<rect x="1030" y="452.5" width="6" height="12" fill="#4d4d4d"/>
<line x1="896" y1="468.5" x2="1066" y2="468.5" stroke="#474747" stroke-width="1"/>
<line x1="915.5" y1="469" x2="915.5" y2="706" stroke="#4a4a4a" stroke-width="1"/>
<path d="M901.0,478.5 C903.0,475.5 908.0,475.5 910.0,478.5 C908.0,481.5 903.0,481.5 901.0,478.5 Z" fill="none" stroke="#b8b8b8" stroke-width="0.9"/>
<circle cx="905.5" cy="478.5" r="1.3" fill="#b8b8b8"/>
<path d="M927.5,477 L929.5,479.5 L931.5,477" fill="none" stroke="#aaa" stroke-width="0.9"/>
<path d="M934.5,474 L938,474 L939,475.5 L944,475.5 L944,482.5 L934.5,482.5 Z" fill="#e4e4e4"/>
<line x1="934.5" y1="477" x2="944" y2="477" stroke="#535353" stroke-width="0.7"/>
<text x="951" y="480.3" font-size="7.5" fill="#dcdcdc" textLength="25.5" lengthAdjust="spacingAndGlyphs" stroke="#dcdcdc" stroke-width="0.25">edite text</text>
<line x1="896" y1="486.5" x2="1066" y2="486.5" stroke="#474747" stroke-width="1"/>
<line x1="896" y1="515.5" x2="1066" y2="515.5" stroke="#474747" stroke-width="1"/>
<line x1="896" y1="544.5" x2="1066" y2="544.5" stroke="#474747" stroke-width="1"/>
<line x1="896" y1="571.5" x2="1066" y2="571.5" stroke="#474747" stroke-width="1"/>
<line x1="896" y1="600.5" x2="1066" y2="600.5" stroke="#474747" stroke-width="1"/>
<line x1="896" y1="628.5" x2="1066" y2="628.5" stroke="#474747" stroke-width="1"/>
<line x1="896" y1="657.5" x2="1066" y2="657.5" stroke="#474747" stroke-width="1"/>
<line x1="896" y1="686.5" x2="1066" y2="686.5" stroke="#474747" stroke-width="1"/>
<path d="M901.0,501 C903.0,498 908.0,498 910.0,501 C908.0,504 903.0,504 901.0,501 Z" fill="none" stroke="#b8b8b8" stroke-width="0.9"/>
<circle cx="905.5" cy="501" r="1.3" fill="#b8b8b8"/>
<text x="942.8" y="505.6" font-size="14" fill="#e8e8e8" textLength="9.4" lengthAdjust="spacingAndGlyphs" font-family="Liberation Serif">T</text>
<text x="963" y="503.3" font-size="7.5" fill="#dcdcdc" textLength="20" lengthAdjust="spacingAndGlyphs" stroke="#dcdcdc" stroke-width="0.25">Layer 2</text>
<path d="M901.0,530 C903.0,527 908.0,527 910.0,530 C908.0,533 903.0,533 901.0,530 Z" fill="none" stroke="#b8b8b8" stroke-width="0.9"/>
<circle cx="905.5" cy="530" r="1.3" fill="#b8b8b8"/>
<defs><pattern id="chk2" x="938" y="519.5" width="6" height="6" patternUnits="userSpaceOnUse"><rect width="6" height="6" fill="#ffffff"/><rect x="3" width="3" height="3" fill="#d0d0d0"/><rect y="3" width="3" height="3" fill="#d0d0d0"/></pattern></defs>
<rect x="938" y="519.5" width="15" height="21" fill="url(#chk2)" stroke="#2e2e2e" stroke-width="0.6"/>
<rect x="939.5" y="521" width="3" height="4" fill="#c09090"/>
<text x="959" y="531.8" font-size="7.5" fill="#dcdcdc" textLength="20.5" lengthAdjust="spacingAndGlyphs" stroke="#dcdcdc" stroke-width="0.25">Layer 3</text>
<path d="M901.0,558 C903.0,555 908.0,555 910.0,558 C908.0,561 903.0,561 901.0,558 Z" fill="none" stroke="#b8b8b8" stroke-width="0.9"/>
<circle cx="905.5" cy="558" r="1.3" fill="#b8b8b8"/>
<text x="942.8" y="562.5999999999999" font-size="14" fill="#e8e8e8" textLength="9.4" lengthAdjust="spacingAndGlyphs" font-family="Liberation Serif">T</text>
<text x="962" y="559.8" font-size="7" fill="#dcdcdc" textLength="84" lengthAdjust="spacingAndGlyphs" stroke="#dcdcdc" stroke-width="0.25">cilia0000000...&lt;&lt;&lt;&lt;&lt;&lt;&lt;&lt;&lt;0 d</text>
<rect x="901" y="581" width="9" height="12" fill="none" stroke="#4a4a4a" stroke-width="0.6"/>
<text x="942.8" y="591.5999999999999" font-size="14" fill="#e8e8e8" textLength="9.4" lengthAdjust="spacingAndGlyphs" font-family="Liberation Serif">T</text>
<text x="963" y="589.3" font-size="7" fill="#dcdcdc" textLength="9.5" lengthAdjust="spacingAndGlyphs" stroke="#dcdcdc" stroke-width="0.25">1ss</text>
<path d="M901.0,615 C903.0,612 908.0,612 910.0,615 C908.0,618 903.0,618 901.0,615 Z" fill="none" stroke="#b8b8b8" stroke-width="0.9"/>
<circle cx="905.5" cy="615" r="1.3" fill="#b8b8b8"/>
<text x="942.8" y="619.5999999999999" font-size="14" fill="#e8e8e8" textLength="9.4" lengthAdjust="spacingAndGlyphs" font-family="Liberation Serif">T</text>
<text x="963" y="617.3" font-size="7" fill="#dcdcdc" textLength="9.5" lengthAdjust="spacingAndGlyphs" stroke="#dcdcdc" stroke-width="0.25">169</text>
<path d="M901.0,644 C903.0,641 908.0,641 910.0,644 C908.0,647 903.0,647 901.0,644 Z" fill="none" stroke="#b8b8b8" stroke-width="0.9"/>
<circle cx="905.5" cy="644" r="1.3" fill="#b8b8b8"/>
<text x="942.8" y="648.5999999999999" font-size="14" fill="#e8e8e8" textLength="9.4" lengthAdjust="spacingAndGlyphs" font-family="Liberation Serif">T</text>
<text x="963" y="645.8" font-size="7" fill="#dcdcdc" textLength="5.5" lengthAdjust="spacingAndGlyphs" stroke="#dcdcdc" stroke-width="0.25">m</text>
<rect x="1066" y="470" width="8" height="236" fill="#4a4a4a"/>
<path d="M1068,476 L1070,474 L1072,476" fill="none" stroke="#888" stroke-width="0.8"/>
<rect x="1067" y="489" width="6" height="66" fill="#686868"/>
<defs><filter id="thin" x="-5%" y="-5%" width="110%" height="110%"><feMorphology operator="erode" radius="0.3"/></filter></defs>
<text x="856.5" y="698" font-size="47" fill="#1a1a1a" textLength="140" lengthAdjust="spacingAndGlyphs" stroke="#535353" stroke-width="0.25">EKOGEA.</text>
<text x="997.5" y="698" font-size="47" fill="#80a224" textLength="73.5" lengthAdjust="spacingAndGlyphs" stroke="#535353" stroke-width="0.25">ORG</text>
<path d="M901.0,672 C903.0,669 908.0,669 910.0,672 C908.0,675 903.0,675 901.0,672 Z" fill="none" stroke="#b8b8b8" stroke-width="0.9"/>
<circle cx="905.5" cy="672" r="1.3" fill="#b8b8b8"/>
<text x="942.8" y="676.5999999999999" font-size="14" fill="#e8e8e8" textLength="9.4" lengthAdjust="spacingAndGlyphs" font-family="Liberation Serif">T</text>
<text x="963" y="673.8" font-size="7" fill="#dcdcdc" textLength="16" lengthAdjust="spacingAndGlyphs" stroke="#dcdcdc" stroke-width="0.25">129...</text>
<path d="M901.0,700.5 C903.0,697.5 908.0,697.5 910.0,700.5 C908.0,703.5 903.0,703.5 901.0,700.5 Z" fill="none" stroke="#b8b8b8" stroke-width="0.9"/>
<circle cx="905.5" cy="700.5" r="1.3" fill="#b8b8b8"/>
<text x="942.8" y="705.0999999999999" font-size="14" fill="#e8e8e8" textLength="9.4" lengthAdjust="spacingAndGlyphs" font-family="Liberation Serif">T</text>
<text x="963" y="702.8" font-size="7" fill="#dcdcdc" textLength="26" lengthAdjust="spacingAndGlyphs" stroke="#dcdcdc" stroke-width="0.25">01.01.1990</text>
<rect x="896" y="706" width="180" height="14" fill="#535353"/>
<line x1="896" y1="706" x2="1076" y2="706" stroke="#474747" stroke-width="0.8"/>
<path d="M949,713 L956,713" fill="none" stroke="#c8c8c8" stroke-width="1"/>
<rect x="946.5" y="710.5" width="5" height="5" rx="2.5" fill="none" stroke="#c8c8c8" stroke-width="1"/><rect x="953.5" y="710.5" width="5" height="5" rx="2.5" fill="none" stroke="#c8c8c8" stroke-width="1"/>
<text x="965" y="715.8" font-size="8" fill="#c8c8c8" font-family="Liberation Serif" stroke="#c8c8c8" stroke-width="0.25" font-style="italic">fx</text>
<rect x="981.5" y="709" width="9" height="8" fill="none" stroke="#c8c8c8" stroke-width="1"/>
<circle cx="986" cy="713" r="2.3" fill="#c8c8c8"/>
<circle cx="1003.5" cy="713" r="4" fill="none" stroke="#c8c8c8" stroke-width="1"/>
<path d="M1006.3,710.2 A4,4 0 0 1 1000.7,715.8 Z" fill="#c8c8c8"/>
<path d="M1015.5,709 L1019,709 L1020,710.5 L1025,710.5 L1025,717 L1015.5,717 Z" fill="#c8c8c8"/>
<rect x="1032.5" y="708.5" width="8" height="9" fill="none" stroke="#c8c8c8" stroke-width="1"/>
<line x1="1036.5" y1="710.5" x2="1036.5" y2="715.5" stroke="#c8c8c8" stroke-width="1"/>
<line x1="1034" y1="713" x2="1039" y2="713" stroke="#c8c8c8" stroke-width="1"/>
<path d="M1049,710 L1057,710 M1050,710 L1051,718 L1055,718 L1056,710 M1052,709 L1054,709" fill="none" stroke="#c8c8c8" stroke-width="1"/></svg></body></html>
